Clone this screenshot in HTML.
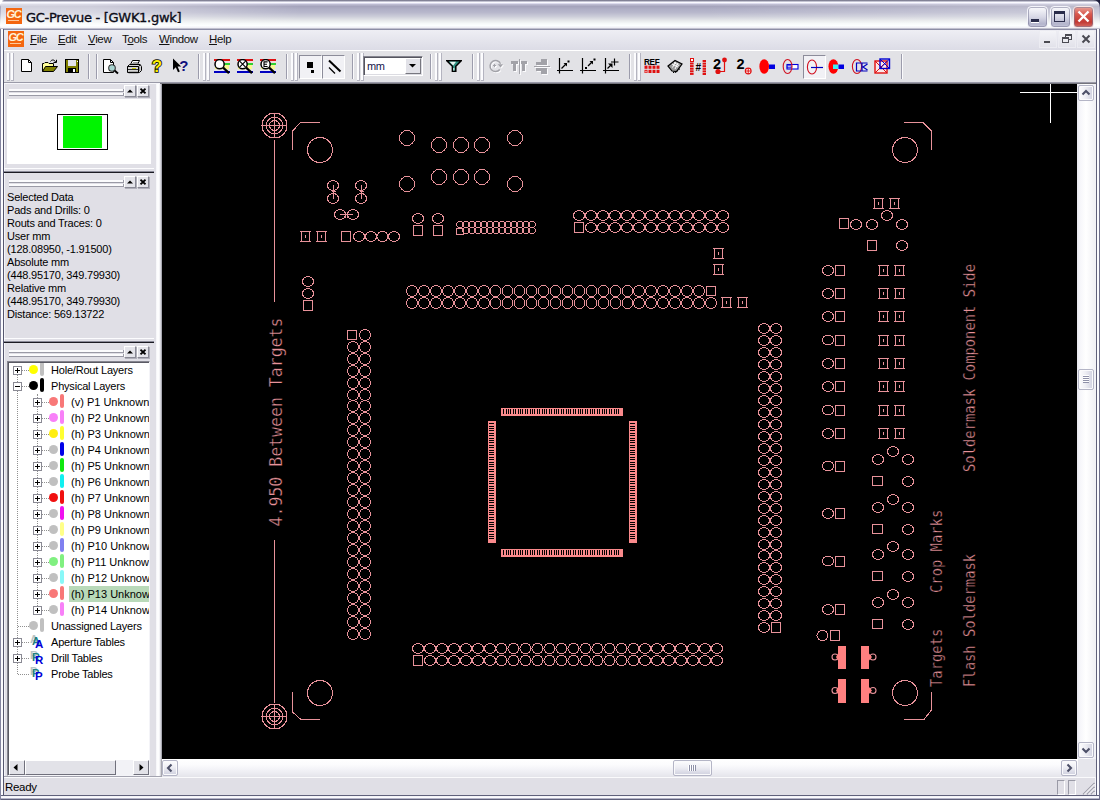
<!DOCTYPE html>
<html><head><meta charset="utf-8"><title>GC-Prevue - [GWK1.gwk]</title>
<style>
html,body{margin:0;padding:0;}
body{width:1100px;height:800px;overflow:hidden;background:#d4d3dc;font-family:"Liberation Sans","DejaVu Sans",sans-serif;font-size:11px;color:#000;position:relative;}
.abs{position:absolute;}
#win{position:absolute;left:0;top:0;width:1100px;height:800px;overflow:hidden;background:#e0dfe6;}
#title{position:absolute;left:0;top:0;width:1100px;height:29px;background:linear-gradient(#5d5d70 0px,#a8a8bc 1px,#fafaff 2.5px,#dddcee 3.5px,#bcbbd0 4.5px,#a5a4bc 6.5px,#b0b0c6 9.5px,#b8b8cc 12.5px,#cccdd9 16.5px,#e6e8ea 20.5px,#f6f9f9 23.5px,#fcffff 25.5px,#f0f0f6 27.5px,#c0c0ce 28.5px,#b0b0c0 29px);border-radius:7px 7px 0 0;}
#titleov{position:absolute;left:1px;top:3px;width:1098px;height:25px;background:linear-gradient(90deg,rgba(255,255,255,.5) 0,rgba(255,255,255,.45) 90px,rgba(255,255,255,.0) 300px,rgba(255,255,255,0) 700px,rgba(255,255,255,.22) 1000px,rgba(255,255,255,.28) 1100px);}
#titletext{position:absolute;left:26px;top:10px;font-family:"DejaVu Sans","Liberation Sans",sans-serif;font-size:13px;letter-spacing:-0.3px;color:#0c0c18;-webkit-text-stroke:0.35px #0c0c18;white-space:nowrap;}
.gcicon{position:absolute;width:16px;height:16px;background:#f4660f;color:#fff3d8;font:italic bold 11px "Liberation Sans",sans-serif;line-height:12px;text-align:center;letter-spacing:-1.2px;overflow:hidden;text-indent:-1px;}
.gcicon:after{content:"";position:absolute;left:2px;top:12px;width:11px;height:1px;background:#ffc89a;}
#menubar{position:absolute;left:4px;top:29px;width:1092px;height:21px;background:linear-gradient(#eeeef4,#dcdce6);border-top:1px solid #8d8ea6;box-sizing:border-box;}
.mi{position:absolute;top:33px;font-size:11.5px;letter-spacing:-0.35px;color:#111;white-space:nowrap;}
.mi u{text-decoration:underline;}
#toolbar{position:absolute;left:4px;top:50px;width:1092px;height:33px;background:#e2e2e6;border-top:1px solid #fff;box-sizing:border-box;}
.info{font-size:11px;letter-spacing:-0.2px;line-height:13px;white-space:nowrap;color:#000;}
.tr{font-size:11px;letter-spacing:-0.2px;line-height:16px;height:16px;padding:0 2px;white-space:nowrap;color:#000;}
</style></head><body>
<div id="win">
<div class="abs" style="left:0;top:28px;width:4px;height:772px;background:linear-gradient(90deg,#8485a0 0,#8485a0 1px,#fbfbfe 1px,#fbfbfe 3px,#56576f 3px,#56576f 4px);"></div>
<div class="abs" style="left:1095px;top:28px;width:5px;height:772px;background:linear-gradient(90deg,#f4f4f8 0,#f4f4f8 1px,#60617b 1px,#60617b 2px,#fbfbfe 2px,#fbfbfe 4px,#6e6f8c 4px,#6e6f8c 5px);"></div>
<div class="abs" style="left:0;top:795px;width:1100px;height:5px;background:linear-gradient(#60617b 0,#60617b 1px,#eeeef4 1px,#fbfbfe 2px,#fbfbfe 3px,#b4b4c8 3px,#b4b4c8 4px,#5e5f79 4px,#5e5f79 5px);"></div>
<div class="abs" style="left:0;top:795px;width:1px;height:5px;background:#8485a0;"></div><div class="abs" style="left:1099px;top:795px;width:1px;height:5px;background:#6e6f8c;"></div>
<div class="abs" style="left:0;top:0;width:1100px;height:10px;background:linear-gradient(90deg,#fff 0,#fff 2px,#8a8aa0 4px,#30304a 1094px,#1a1a3a 1100px);"></div>
<div id="title"></div><div id="titleov"></div>
<div class="gcicon" style="left:6px;top:8px;">GC</div>
<div id="titletext">GC-Prevue - [GWK1.gwk]</div>
<div class="abs" style="left:1027px;top:6px;width:21px;height:22px;box-sizing:border-box;border:1px solid #f4f4fa;border-radius:4px;background:linear-gradient(#fbfbfd 0,#d8d8e6 50%,#b3b4cc 85%,#c9c9dc 100%);box-shadow:0 0 0 1px rgba(120,120,150,.55) inset;"><div class="abs" style="left:3px;top:12px;width:8px;height:3px;background:#2a2c4a;box-shadow:0 1px 0 #fff;"></div></div>
<div class="abs" style="left:1050px;top:6px;width:21px;height:22px;box-sizing:border-box;border:1px solid #f4f4fa;border-radius:4px;background:linear-gradient(#fbfbfd 0,#d8d8e6 50%,#b3b4cc 85%,#c9c9dc 100%);box-shadow:0 0 0 1px rgba(120,120,150,.55) inset;"><div class="abs" style="left:3px;top:4px;width:11px;height:11px;border:1px solid #2a2c4a;border-top-width:3px;box-sizing:border-box;"></div></div>
<div class="abs" style="left:1073px;top:6px;width:21px;height:22px;box-sizing:border-box;border:1px solid #f6e6e4;border-radius:4px;background:linear-gradient(#e9a39a 0,#d9584e 35%,#c23a34 75%,#d66a62 100%);box-shadow:0 0 0 1px rgba(120,120,150,.55) inset;"><svg class="abs" style="left:2px;top:2px" width="15" height="15" viewBox="0 0 15 15"><path d="M2.5 2.5 L12.5 12.5 M12.5 2.5 L2.5 12.5" stroke="#fff" stroke-width="2.4" stroke-linecap="butt"/></svg></div>
<div id="menubar"></div>
<div class="gcicon" style="left:8px;top:31px;">GC</div>
<div class="mi" style="left:30px;"><u>F</u>ile</div>
<div class="mi" style="left:58px;"><u>E</u>dit</div>
<div class="mi" style="left:88px;"><u>V</u>iew</div>
<div class="mi" style="left:122px;">T<u>o</u>ols</div>
<div class="mi" style="left:159px;"><u>W</u>indow</div>
<div class="mi" style="left:209px;"><u>H</u>elp</div>
<div class="abs" style="left:1040px;top:31px;width:16px;height:16px;background:linear-gradient(#f4f4f8,#e2e2ea);box-shadow:0 0 0 1px #ececf2;"><div class="abs" style="left:4px;top:10px;width:6px;height:2px;background:#4a4a52;"></div></div>
<div class="abs" style="left:1059px;top:31px;width:16px;height:16px;background:linear-gradient(#f4f4f8,#e2e2ea);box-shadow:0 0 0 1px #ececf2;"><div class="abs" style="left:6px;top:3px;width:7px;height:6px;border:1px solid #4a4a52;border-top-width:2px;box-sizing:border-box;"></div><div class="abs" style="left:3px;top:6px;width:7px;height:6px;border:1px solid #4a4a52;border-top-width:2px;box-sizing:border-box;background:#ebebf0;"></div></div>
<div class="abs" style="left:1078px;top:31px;width:16px;height:16px;background:linear-gradient(#f4f4f8,#e2e2ea);box-shadow:0 0 0 1px #ececf2;"><svg class="abs" style="left:3px;top:3px" width="10" height="10" viewBox="0 0 10 10"><path d="M1.5 1.5 L8.5 8.5 M8.5 1.5 L1.5 8.5" stroke="#4a4a52" stroke-width="2"/></svg></div>
<div id="toolbar"></div>
<div class="abs" style="left:4px;top:82px;width:1092px;height:1px;background:#9a9aa8;"></div>
<div class="abs" style="left:4px;top:83px;width:1092px;height:1px;background:#f6f6fa;"></div>
<div class="abs" style="left:7px;top:53px;width:2px;height:27px;background:#fcfcfe;border-right:1px solid #b4b4c0;border-bottom:1px solid #b4b4c0;"></div><div class="abs" style="left:11px;top:53px;width:2px;height:27px;background:#fcfcfe;border-right:1px solid #b4b4c0;border-bottom:1px solid #b4b4c0;"></div>
<div class="abs" style="left:203px;top:53px;width:2px;height:27px;background:#fcfcfe;border-right:1px solid #b4b4c0;border-bottom:1px solid #b4b4c0;"></div><div class="abs" style="left:207px;top:53px;width:2px;height:27px;background:#fcfcfe;border-right:1px solid #b4b4c0;border-bottom:1px solid #b4b4c0;"></div>
<div class="abs" style="left:291px;top:53px;width:2px;height:27px;background:#fcfcfe;border-right:1px solid #b4b4c0;border-bottom:1px solid #b4b4c0;"></div><div class="abs" style="left:295px;top:53px;width:2px;height:27px;background:#fcfcfe;border-right:1px solid #b4b4c0;border-bottom:1px solid #b4b4c0;"></div>
<div class="abs" style="left:357px;top:53px;width:2px;height:27px;background:#fcfcfe;border-right:1px solid #b4b4c0;border-bottom:1px solid #b4b4c0;"></div><div class="abs" style="left:361px;top:53px;width:2px;height:27px;background:#fcfcfe;border-right:1px solid #b4b4c0;border-bottom:1px solid #b4b4c0;"></div>
<div class="abs" style="left:435px;top:53px;width:2px;height:27px;background:#fcfcfe;border-right:1px solid #b4b4c0;border-bottom:1px solid #b4b4c0;"></div><div class="abs" style="left:439px;top:53px;width:2px;height:27px;background:#fcfcfe;border-right:1px solid #b4b4c0;border-bottom:1px solid #b4b4c0;"></div>
<div class="abs" style="left:477px;top:53px;width:2px;height:27px;background:#fcfcfe;border-right:1px solid #b4b4c0;border-bottom:1px solid #b4b4c0;"></div><div class="abs" style="left:481px;top:53px;width:2px;height:27px;background:#fcfcfe;border-right:1px solid #b4b4c0;border-bottom:1px solid #b4b4c0;"></div>
<div class="abs" style="left:634px;top:53px;width:2px;height:27px;background:#fcfcfe;border-right:1px solid #b4b4c0;border-bottom:1px solid #b4b4c0;"></div><div class="abs" style="left:638px;top:53px;width:2px;height:27px;background:#fcfcfe;border-right:1px solid #b4b4c0;border-bottom:1px solid #b4b4c0;"></div>
<div class="abs" style="left:88px;top:54px;width:1px;height:25px;background:#9c9cac;border-right:1px solid #fafafc;"></div>
<div class="abs" style="left:96px;top:54px;width:1px;height:25px;background:#9c9cac;border-right:1px solid #fafafc;"></div>
<div class="abs" style="left:198px;top:54px;width:1px;height:25px;background:#9c9cac;border-right:1px solid #fafafc;"></div>
<div class="abs" style="left:286px;top:54px;width:1px;height:25px;background:#9c9cac;border-right:1px solid #fafafc;"></div>
<div class="abs" style="left:352px;top:54px;width:1px;height:25px;background:#9c9cac;border-right:1px solid #fafafc;"></div>
<div class="abs" style="left:430px;top:54px;width:1px;height:25px;background:#9c9cac;border-right:1px solid #fafafc;"></div>
<div class="abs" style="left:472px;top:54px;width:1px;height:25px;background:#9c9cac;border-right:1px solid #fafafc;"></div>
<div class="abs" style="left:629px;top:54px;width:1px;height:25px;background:#9c9cac;border-right:1px solid #fafafc;"></div>
<div class="abs" style="left:901px;top:54px;width:1px;height:25px;background:#9c9cac;border-right:1px solid #fafafc;"></div>
<!--ICONS-->
<svg class="abs" style="left:21px;top:59px" width="16" height="16" viewBox="0 0 16 16" ><path d="M0.5 0.5H7.5L10.5 3.5V12.5H0.5Z" fill="#fff" stroke="#000"/><path d="M7.5 0.5V3.5H10.5" fill="none" stroke="#000"/></svg>
<svg class="abs" style="left:42px;top:59px" width="16" height="16" viewBox="0 0 16 16" ><path d="M0.5 12.5V4.5H2L3 3.5H6L7 4.5H11.5V7.5" fill="#ffff99" stroke="#000"/><path d="M0.5 12.5L3.5 7.5H15.5L11.5 12.5Z" fill="#808000" stroke="#000"/><path d="M8.5 2.5C9.5 0.5 12.5 0.3 13.5 3" fill="none" stroke="#000"/><path d="M11.5 3.5H14.5V0.8" fill="none" stroke="#000"/></svg>
<svg class="abs" style="left:65px;top:59px" width="16" height="16" viewBox="0 0 16 16" shape-rendering="crispEdges"><rect x="0.5" y="0.5" width="13" height="13" fill="#808000" stroke="#000"/><rect x="3" y="1" width="8" height="6" fill="#e4e4ea"/><rect x="11.5" y="1.5" width="1" height="1" fill="#fff"/><rect x="3" y="9" width="8" height="4" fill="#000"/><rect x="8" y="10" width="2" height="3" fill="#fff"/></svg>
<svg class="abs" style="left:103px;top:59px" width="16" height="16" viewBox="0 0 16 16" ><path d="M0.5 0.5H7.5L10.5 3.5V13.5H0.5Z" fill="#fff" stroke="#000"/><path d="M7.5 0.5V3.5H10.5" fill="none" stroke="#000"/><circle cx="9" cy="9" r="3.3" fill="#a8d4d0" stroke="#333" stroke-width="1.1"/><path d="M11.5 11.5L15 14.5" stroke="#000" stroke-width="2"/></svg>
<svg class="abs" style="left:126px;top:60px" width="16" height="16" viewBox="0 0 16 16" ><path d="M4.5 4.5L6.5 0.5H13.5L11.5 4.5Z" fill="#fff" stroke="#000"/><path d="M7 2.5H12M6 3.5H11" stroke="#777" stroke-width=".7"/><path d="M1.5 6.5L3.5 4.5H14L15.5 6.5V10.5L13.5 12.5H1.5Z" fill="#d4d4d4" stroke="#000"/><path d="M1.5 6.5H12.5V12.5M12.5 6.5L14.5 4.8" fill="none" stroke="#000"/><path d="M1.5 9.5H12.5" stroke="#000" stroke-width=".8"/><rect x="6" y="8" width="4" height="1" fill="#c8c800"/><path d="M2.5 12.5H12.5" stroke="#000" stroke-width="1.4"/><path d="M13.5 7.5V11" stroke="#555" stroke-dasharray="1 1"/></svg>
<svg class="abs" style="left:149px;top:57px" width="16" height="18" viewBox="0 0 16 18" ><text x="8" y="15.2" text-anchor="middle" font-family="Liberation Sans,sans-serif" font-weight="bold" font-size="17" fill="#ffee00" stroke="#000" stroke-width="1.6" paint-order="stroke">?</text></svg>
<svg class="abs" style="left:172px;top:58px" width="18" height="16" viewBox="0 0 18 16" ><path d="M1 0.5V12L3.8 9.2L6 14.2L7.8 13.4L5.6 8.6H9.2Z" fill="#000"/><text x="11.8" y="12.6" text-anchor="middle" font-family="Liberation Sans,sans-serif" font-weight="bold" font-size="15" fill="#10107c">?</text></svg>
<svg class="abs" style="left:214px;top:59px" width="16" height="16" viewBox="0 0 16 16" ><rect x="0" y="0" width="16" height="2" fill="#e01010"/><rect x="0" y="2" width="16" height="2" fill="#f4d8dc"/><rect x="8" y="4" width="8" height="2" fill="#30d030"/><rect x="1" y="6" width="14" height="4.5" fill="#f8f890"/><rect x="0" y="10.5" width="16" height="1.5" fill="#e8e8f4"/><rect x="0" y="12" width="16" height="2" fill="#0000c0"/><path d="M9 8.5L15 14.2" stroke="#000" stroke-width="2.4"/><circle cx="5.6" cy="5.2" r="4.6" fill="#fff" stroke="#000" stroke-width="1.5"/></svg>
<svg class="abs" style="left:237px;top:59px" width="16" height="16" viewBox="0 0 16 16" ><rect x="0" y="0" width="16" height="2" fill="#e01010"/><rect x="0" y="2" width="16" height="2" fill="#f4d8dc"/><rect x="8" y="4" width="8" height="2" fill="#30d030"/><rect x="1" y="6" width="14" height="4.5" fill="#f8f890"/><rect x="0" y="10.5" width="16" height="1.5" fill="#e8e8f4"/><rect x="0" y="12" width="16" height="2" fill="#0000c0"/><path d="M9 8.5L15 14.2" stroke="#000" stroke-width="2.4"/><circle cx="5.6" cy="5.2" r="4.6" fill="#fff" stroke="#000" stroke-width="1.5"/><path d="M2.6 2.2L8.6 8.2M8.6 2.2L2.6 8.2" stroke="#000" stroke-width="1.1"/></svg>
<svg class="abs" style="left:260px;top:59px" width="16" height="16" viewBox="0 0 16 16" ><rect x="0" y="0" width="16" height="2" fill="#e01010"/><rect x="0" y="2" width="16" height="2" fill="#f4d8dc"/><rect x="8" y="4" width="8" height="2" fill="#30d030"/><rect x="1" y="6" width="14" height="4.5" fill="#f8f890"/><rect x="0" y="10.5" width="16" height="1.5" fill="#e8e8f4"/><rect x="0" y="12" width="16" height="2" fill="#0000c0"/><path d="M9 8.5L15 14.2" stroke="#000" stroke-width="2.4"/><circle cx="5.6" cy="5.2" r="4.6" fill="#fff" stroke="#000" stroke-width="1.5"/><path d="M7.6 2.9H4V7.5H7.6M4 5.2H7" fill="none" stroke="#000" stroke-width="1.1"/></svg>
<div class="abs" style="left:299px;top:55px;width:23px;height:24px;box-sizing:border-box;background:#f1f1f5;border:1px solid;border-color:#8c8c9a #fff #fff #8c8c9a;"></div>
<div class="abs" style="left:322px;top:55px;width:23px;height:24px;box-sizing:border-box;background:#f1f1f5;border:1px solid;border-color:#8c8c9a #fff #fff #8c8c9a;"></div>
<svg class="abs" style="left:303px;top:59px" width="16" height="16" viewBox="0 0 16 16" shape-rendering="crispEdges"><rect x="4" y="3" width="6" height="6" fill="#000"/><rect x="8" y="11" width="3" height="3" fill="#000"/></svg>
<svg class="abs" style="left:326px;top:59px" width="16" height="16" viewBox="0 0 16 16" ><path d="M3 1.5L14.5 12.5" stroke="#000" stroke-width="2"/><path d="M3 8.5L9 14.5" stroke="#000" stroke-width="1.2"/></svg>
<div class="abs" style="left:363px;top:56px;width:60px;height:20px;box-sizing:border-box;background:#fff;border:1px solid;border-color:#85858f #fff #fff #85858f;box-shadow:inset 1px 1px 0 #55555f, inset -1px -1px 0 #dcdce2;"></div>
<div class="abs" style="left:367px;top:60px;font-size:11px;color:#15154a;letter-spacing:-0.4px;">mm</div>
<div class="abs" style="left:405px;top:58px;width:16px;height:16px;box-sizing:border-box;background:#e2e2e8;border:1px solid;border-color:#fff #77777f #77777f #fff;"></div>
<svg class="abs" style="left:409px;top:64px" width="7" height="4" viewBox="0 0 7 4" ><path d="M0 0H7L3.5 3.5Z" fill="#000"/></svg>
<svg class="abs" style="left:446px;top:60px" width="16" height="16" viewBox="0 0 16 16" ><path d="M0.8 0.8H15.2L9.8 6.3V11.2H6.4V6.3Z" fill="#2f9080" stroke="#000" stroke-width="1.5" stroke-linejoin="miter"/><path d="M3.5 1.8H10L7.2 5.5Z" fill="#e8f4f0"/><rect x="7.2" y="8" width="1.2" height="2.6" fill="#d0ece4"/></svg>
<svg class="abs" style="left:489px;top:60px" width="16" height="16" viewBox="0 0 16 16" ><path d="M12.6 4.8A5.5 5.5 0 1 0 11.8 10.6" fill="none" stroke="#fbfbfd" stroke-width="1.5"/><path d="M9.6 5.2H15L12.6 8.6Z" fill="#fbfbfd"/><path d="M5 6.5H8M6.5 5V8" stroke="#fbfbfd" stroke-width="1"/></svg>
<svg class="abs" style="left:512px;top:60px" width="16" height="16" viewBox="0 0 16 16" shape-rendering="crispEdges"><path d="M0 1.5H6.5V5H5V12H2V5H0Z" fill="#fbfbfd"/><path d="M9.5 1.5H15.5V5H13.5V12H10.5V5H9.5Z" fill="#fbfbfd"/><path d="M8 0V15" stroke="#fbfbfd" stroke-width="1"/></svg>
<svg class="abs" style="left:535px;top:60px" width="16" height="16" viewBox="0 0 16 16" shape-rendering="crispEdges"><path d="M2 0H13V6H2V3H7V0Z M2 9H13V15H7V12H2Z" fill="#fbfbfd"/><path d="M7 0H13V3H7Z" fill="#fbfbfd"/><path d="M0 7.5H16" stroke="#fbfbfd" stroke-width="1"/></svg>
<svg class="abs" style="left:488px;top:59px" width="16" height="16" viewBox="0 0 16 16" ><path d="M12.6 4.8A5.5 5.5 0 1 0 11.8 10.6" fill="none" stroke="#a2a2a8" stroke-width="1.5"/><path d="M9.6 5.2H15L12.6 8.6Z" fill="#a2a2a8"/><path d="M5 6.5H8M6.5 5V8" stroke="#a2a2a8" stroke-width="1"/></svg>
<svg class="abs" style="left:511px;top:59px" width="16" height="16" viewBox="0 0 16 16" shape-rendering="crispEdges"><path d="M0 1.5H6.5V5H5V12H2V5H0Z" fill="#a2a2a8"/><path d="M9.5 1.5H15.5V5H13.5V12H10.5V5H9.5Z" fill="#a2a2a8"/><path d="M8 0V15" stroke="#a2a2a8" stroke-width="1"/></svg>
<svg class="abs" style="left:534px;top:59px" width="16" height="16" viewBox="0 0 16 16" shape-rendering="crispEdges"><path d="M2 0H13V6H2V3H7V0Z M2 9H13V15H7V12H2Z" fill="#a2a2a8"/><path d="M7 0H13V3H7Z" fill="#a2a2a8"/><path d="M0 7.5H16" stroke="#a2a2a8" stroke-width="1"/></svg>
<svg class="abs" style="left:557px;top:58px" width="16" height="16" viewBox="0 0 16 16" ><path d="M2.5 0V15.5M0 12.5H16" stroke="#000" stroke-width="1.2" fill="none"/><path d="M4.5 10.5L9 6" stroke="#000" stroke-width="1.2"/><path d="M6.5 5H10V8.5Z" fill="#000"/><rect x="10.5" y="2.5" width="2" height="2" fill="#000"/></svg>
<svg class="abs" style="left:580px;top:58px" width="16" height="16" viewBox="0 0 16 16" ><path d="M2.5 0V15.5M0 12.5H16" stroke="#000" stroke-width="1.2" fill="none"/><rect x="5" y="9" width="2" height="2" fill="#000"/><path d="M8 8L12 4" stroke="#000" stroke-width="1.2"/><path d="M9.5 3H13V6.5Z" fill="#000"/><rect x="13.5" y="0.5" width="2" height="2" fill="#000"/></svg>
<svg class="abs" style="left:603px;top:58px" width="16" height="16" viewBox="0 0 16 16" ><path d="M2.5 0V15.5M0 12.5H16" stroke="#000" stroke-width="1.2" fill="none"/><path d="M4.5 10.5L8 7" stroke="#000" stroke-width="1.2"/><path d="M5 5.5H9.5V10Z" fill="#000"/><path d="M11.5 0.5V7.5M8 4H15.5" stroke="#000" stroke-width="1.2"/></svg>
<svg class="abs" style="left:644px;top:58px" width="17" height="17" viewBox="0 0 17 17" ><text x="0" y="6.6" font-family="Liberation Sans,sans-serif" font-weight="bold" font-size="8.2" letter-spacing="-0.3" fill="#000">REF</text><rect x="0.5" y="7.6" width="3" height="3.2" fill="#e01010"/><rect x="4.5" y="7.6" width="3" height="3.2" fill="#e01010"/><rect x="8.5" y="7.6" width="3" height="3.2" fill="#e01010"/><rect x="12.5" y="7.6" width="3" height="3.2" fill="#e01010"/><rect x="0.5" y="11.8" width="3" height="3.2" fill="#e01010"/><rect x="4.5" y="11.8" width="3" height="3.2" fill="#e01010"/><rect x="8.5" y="11.8" width="3" height="3.2" fill="#e01010"/><rect x="12.5" y="11.8" width="3" height="3.2" fill="#e01010"/><rect x="1.5" y="12.8" width="1" height="1.6" fill="#fff"/></svg>
<svg class="abs" style="left:667px;top:59px" width="16" height="16" viewBox="0 0 16 16" ><path d="M1 7L8 1.5L15 5L9.5 12.5L5 12Z" fill="#9a9a9a" stroke="#000" stroke-width="1.2"/><path d="M5 5L11 8M7 3.5L12 6.5M8 10L11 4M5.5 8.5L8.5 3" stroke="#fff" stroke-width="1"/><path d="M6 13.5H9M10 12L13 9.5" stroke="#000" stroke-width="1.2" stroke-dasharray="1.2 1"/></svg>
<svg class="abs" style="left:690px;top:58px" width="16" height="18" viewBox="0 0 16 18" ><rect x="0.5" y="0.5" width="3" height="3" fill="#fff" stroke="#e01010"/><rect x="0" y="4.5" width="3.6" height="2" fill="#e01010"/><rect x="0" y="7.1" width="3.6" height="2" fill="#e01010"/><rect x="0" y="9.7" width="3.6" height="2" fill="#e01010"/><rect x="0" y="12.3" width="3.6" height="2" fill="#e01010"/><rect x="0" y="14.9" width="3.6" height="2" fill="#e01010"/><rect x="12.6" y="2" width="3.4" height="2" fill="#e01010"/><rect x="12.6" y="4.6" width="3.4" height="2" fill="#e01010"/><rect x="12.6" y="7.2" width="3.4" height="2" fill="#e01010"/><rect x="12.6" y="9.8" width="3.4" height="2" fill="#e01010"/><rect x="12.6" y="12.4" width="3.4" height="2" fill="#e01010"/><rect x="12.6" y="15" width="3.4" height="2" fill="#e01010"/><text x="8.2" y="12.5" text-anchor="middle" font-family="Liberation Sans,sans-serif" font-weight="bold" font-size="10" fill="#000">#</text></svg>
<svg class="abs" style="left:713px;top:57px" width="17" height="18" viewBox="0 0 17 18" ><text x="0" y="11.5" font-family="Liberation Sans,sans-serif" font-weight="bold" font-size="14.5" fill="#000">2</text><path d="M5 14.5H11.5V3" fill="none" stroke="#e01010" stroke-width="1.2"/><circle cx="11.5" cy="3" r="2.4" fill="#e01010"/><circle cx="5" cy="14.5" r="2.6" fill="#e01010"/></svg>
<svg class="abs" style="left:736px;top:57px" width="17" height="18" viewBox="0 0 17 18" ><text x="0.5" y="11.5" font-family="Liberation Sans,sans-serif" font-weight="bold" font-size="14.5" fill="#000">2</text><circle cx="12.2" cy="14" r="2.9" fill="#fff" stroke="#e01010" stroke-width="1.1"/><path d="M12.2 11V17M9.2 14H15.2" stroke="#e01010" stroke-width="1"/></svg>
<svg class="abs" style="left:759px;top:58px" width="17" height="17" viewBox="0 0 17 17" ><ellipse cx="5.2" cy="8.5" rx="4.8" ry="7.3" fill="#ff0000"/><rect x="10" y="6.5" width="6" height="4.5" fill="#0000e0"/></svg>
<svg class="abs" style="left:782px;top:58px" width="17" height="17" viewBox="0 0 17 17" ><rect x="5" y="6.5" width="11" height="4.5" fill="#fff" stroke="#0000e0" stroke-width="1.1"/><rect x="5.2" y="7.8" width="4" height="2" fill="#dcdcf4" stroke="#0000e0" stroke-width=".8"/><ellipse cx="5.6" cy="8.5" rx="4.4" ry="7" fill="none" stroke="#d01020" stroke-width="1.1"/></svg>
<div class="abs" style="left:803px;top:55px;width:23px;height:24px;box-sizing:border-box;background:#f1f1f5;border:1px solid;border-color:#8c8c9a #fff #fff #8c8c9a;"></div>
<svg class="abs" style="left:806px;top:58px" width="18" height="17" viewBox="0 0 18 17" ><ellipse cx="6" cy="9" rx="4.6" ry="7" fill="none" stroke="#d01020" stroke-width="1.1"/><path d="M5 9.5H17" stroke="#0000c0" stroke-width="1.2"/></svg>
<svg class="abs" style="left:828px;top:58px" width="17" height="17" viewBox="0 0 17 17" ><ellipse cx="5.4" cy="8.5" rx="4.9" ry="7.3" fill="#ff0000"/><rect x="5" y="6.5" width="5.5" height="4.5" fill="#40f0f0"/><rect x="10.5" y="6.5" width="5.5" height="4.5" fill="#0000e0"/></svg>
<svg class="abs" style="left:851px;top:58px" width="17" height="17" viewBox="0 0 17 17" ><ellipse cx="6" cy="8.5" rx="4.6" ry="7" fill="none" stroke="#d01020" stroke-width="1.1"/><path d="M16.5 5H5.5V13H16.5M11 5V13M16.5 6L12 9L16.5 12" fill="none" stroke="#0000c0" stroke-width="1.2"/></svg>
<svg class="abs" style="left:874px;top:58px" width="17" height="17" viewBox="0 0 17 17" ><rect x="1" y="3" width="12" height="12" fill="#fbe8e8" stroke="#e01010" stroke-width="1.4"/><path d="M1 3L13 15M13 3L1 15" stroke="#e01010" stroke-width="1"/><rect x="6" y="1" width="9.5" height="9.5" fill="none" stroke="#0000d0" stroke-width="1.4"/><path d="M6 1L15.5 10.5M15.5 1L6 10.5" stroke="#0000d0" stroke-width="1"/></svg>
<div class="abs" style="left:4px;top:84px;width:158px;height:693px;background:#e0dfe6;"></div>
<div class="abs" style="left:156px;top:84px;width:6px;height:693px;background:linear-gradient(90deg,#f0f0f5 0,#fdfdfe 1px,#fdfdfe 3px,#e9e9ee 4px,#c4c4cc 5px,#8c8c94 6px);"></div>
<div class="abs" style="left:4px;top:84px;width:1px;height:693px;background:#f4f4f8;"></div>
<div class="abs" style="left:9px;top:89px;width:114px;height:2px;background:#fbfbfd;border-bottom:1px solid #9a9aa6;border-right:1px solid #9a9aa6;"></div><div class="abs" style="left:9px;top:93px;width:114px;height:2px;background:#fbfbfd;border-bottom:1px solid #9a9aa6;border-right:1px solid #9a9aa6;"></div><div class="abs" style="left:124px;top:85px;width:12px;height:12px;box-sizing:border-box;background:#e4e4ea;border:1px solid;border-color:#fff #8a8a96 #8a8a96 #fff;box-shadow:1px 1px 0 #b0b0ba;"><svg class="abs" style="left:2px;top:3px" width="6" height="4" viewBox="0 0 6 4"><path d="M0 3.5H6L3 0.5Z" fill="#000"/></svg></div><div class="abs" style="left:137px;top:85px;width:12px;height:12px;box-sizing:border-box;background:#e4e4ea;border:1px solid;border-color:#fff #8a8a96 #8a8a96 #fff;box-shadow:1px 1px 0 #b0b0ba;"><svg class="abs" style="left:2px;top:2px" width="6" height="6" viewBox="0 0 6 6"><path d="M0.5 0.8L5.5 5.2M5.5 0.8L0.5 5.2" stroke="#000" stroke-width="1.8"/></svg></div>
<div class="abs" style="left:7px;top:99px;width:144px;height:65px;background:#fff;"></div>
<div class="abs" style="left:57px;top:114px;width:51px;height:36px;box-sizing:border-box;border:1px solid #000;background:#fff;"></div>
<div class="abs" style="left:63px;top:116px;width:39px;height:32px;background:#00f400;"></div>
<div class="abs" style="left:4px;top:168px;width:150px;height:1px;background:#fcfcfe;"></div><div class="abs" style="left:4px;top:171px;width:150px;height:1px;background:#8a8a98;"></div><div class="abs" style="left:4px;top:172px;width:150px;height:1px;background:#1a1a22;"></div>
<div class="abs" style="left:9px;top:180px;width:114px;height:2px;background:#fbfbfd;border-bottom:1px solid #9a9aa6;border-right:1px solid #9a9aa6;"></div><div class="abs" style="left:9px;top:184px;width:114px;height:2px;background:#fbfbfd;border-bottom:1px solid #9a9aa6;border-right:1px solid #9a9aa6;"></div><div class="abs" style="left:124px;top:176px;width:12px;height:12px;box-sizing:border-box;background:#e4e4ea;border:1px solid;border-color:#fff #8a8a96 #8a8a96 #fff;box-shadow:1px 1px 0 #b0b0ba;"><svg class="abs" style="left:2px;top:3px" width="6" height="4" viewBox="0 0 6 4"><path d="M0 3.5H6L3 0.5Z" fill="#000"/></svg></div><div class="abs" style="left:137px;top:176px;width:12px;height:12px;box-sizing:border-box;background:#e4e4ea;border:1px solid;border-color:#fff #8a8a96 #8a8a96 #fff;box-shadow:1px 1px 0 #b0b0ba;"><svg class="abs" style="left:2px;top:2px" width="6" height="6" viewBox="0 0 6 6"><path d="M0.5 0.8L5.5 5.2M5.5 0.8L0.5 5.2" stroke="#000" stroke-width="1.8"/></svg></div>
<div class="abs info" style="left:7px;top:191px;">Selected Data</div>
<div class="abs info" style="left:7px;top:204px;">Pads and Drills: 0</div>
<div class="abs info" style="left:7px;top:217px;">Routs and Traces: 0</div>
<div class="abs info" style="left:7px;top:230px;">User mm</div>
<div class="abs info" style="left:7px;top:243px;">(128.08950, -1.91500)</div>
<div class="abs info" style="left:7px;top:256px;">Absolute mm</div>
<div class="abs info" style="left:7px;top:269px;">(448.95170, 349.79930)</div>
<div class="abs info" style="left:7px;top:282px;">Relative mm</div>
<div class="abs info" style="left:7px;top:295px;">(448.95170, 349.79930)</div>
<div class="abs info" style="left:7px;top:308px;">Distance: 569.13722</div>
<div class="abs" style="left:4px;top:338px;width:150px;height:1px;background:#fcfcfe;"></div><div class="abs" style="left:4px;top:341px;width:150px;height:1px;background:#8a8a98;"></div><div class="abs" style="left:4px;top:342px;width:150px;height:1px;background:#1a1a22;"></div>
<div class="abs" style="left:9px;top:350px;width:114px;height:2px;background:#fbfbfd;border-bottom:1px solid #9a9aa6;border-right:1px solid #9a9aa6;"></div><div class="abs" style="left:9px;top:354px;width:114px;height:2px;background:#fbfbfd;border-bottom:1px solid #9a9aa6;border-right:1px solid #9a9aa6;"></div><div class="abs" style="left:124px;top:346px;width:12px;height:12px;box-sizing:border-box;background:#e4e4ea;border:1px solid;border-color:#fff #8a8a96 #8a8a96 #fff;box-shadow:1px 1px 0 #b0b0ba;"><svg class="abs" style="left:2px;top:3px" width="6" height="4" viewBox="0 0 6 4"><path d="M0 3.5H6L3 0.5Z" fill="#000"/></svg></div><div class="abs" style="left:137px;top:346px;width:12px;height:12px;box-sizing:border-box;background:#e4e4ea;border:1px solid;border-color:#fff #8a8a96 #8a8a96 #fff;box-shadow:1px 1px 0 #b0b0ba;"><svg class="abs" style="left:2px;top:2px" width="6" height="6" viewBox="0 0 6 6"><path d="M0.5 0.8L5.5 5.2M5.5 0.8L0.5 5.2" stroke="#000" stroke-width="1.8"/></svg></div>
<div class="abs" style="left:7px;top:361px;width:143px;height:415px;box-sizing:border-box;background:#fff;border:1px solid;border-color:#85858f #f4f4f8 #f4f4f8 #85858f;box-shadow:inset 1px 1px 0 #5a5a64;"></div>
<div class="abs" style="left:9px;top:363px;width:140px;height:397px;overflow:hidden;">
<div class="abs" style="left:8px;top:12px;width:0;height:299px;border-left:1px dotted #909090;"></div>
<div class="abs" style="left:28px;top:31px;width:0;height:216px;border-left:1px dotted #909090;"></div>
<div class="abs" style="left:9px;top:7px;width:11px;height:0;border-top:1px dotted #909090;"></div>
<div class="abs" style="left:4px;top:3px;width:9px;height:9px;box-sizing:border-box;border:1px solid #8a8a94;background:#fff;"><div class="abs" style="left:1px;top:3px;width:5px;height:1px;background:#000;"></div><div class="abs" style="left:3px;top:1px;width:1px;height:5px;background:#000;"></div></div>
<div class="abs" style="left:20px;top:2px;width:9px;height:9px;border-radius:50%;background:#ffff00;"></div>
<div class="abs" style="left:31px;top:-1px;width:4px;height:14px;border-radius:2px;background:#c0c0c0;"></div>
<div class="abs tr" style="left:40px;top:-1px;">Hole/Rout Layers</div>
<div class="abs" style="left:9px;top:23px;width:11px;height:0;border-top:1px dotted #909090;"></div>
<div class="abs" style="left:4px;top:19px;width:9px;height:9px;box-sizing:border-box;border:1px solid #8a8a94;background:#fff;"><div class="abs" style="left:1px;top:3px;width:5px;height:1px;background:#000;"></div></div>
<div class="abs" style="left:20px;top:18px;width:9px;height:9px;border-radius:50%;background:#000;"></div>
<div class="abs" style="left:31px;top:15px;width:4px;height:14px;border-radius:2px;background:#000;"></div>
<div class="abs tr" style="left:40px;top:15px;">Physical Layers</div>
<div class="abs" style="left:29px;top:39px;width:11px;height:0;border-top:1px dotted #909090;"></div>
<div class="abs" style="left:24px;top:35px;width:9px;height:9px;box-sizing:border-box;border:1px solid #8a8a94;background:#fff;"><div class="abs" style="left:1px;top:3px;width:5px;height:1px;background:#000;"></div><div class="abs" style="left:3px;top:1px;width:1px;height:5px;background:#000;"></div></div>
<div class="abs" style="left:40px;top:34px;width:9px;height:9px;border-radius:50%;background:#f87878;"></div>
<div class="abs" style="left:51px;top:31px;width:4px;height:14px;border-radius:2px;background:#f87878;"></div>
<div class="abs tr" style="left:60px;top:31px;letter-spacing:0;">(v) P1 Unknown</div>
<div class="abs" style="left:29px;top:55px;width:11px;height:0;border-top:1px dotted #909090;"></div>
<div class="abs" style="left:24px;top:51px;width:9px;height:9px;box-sizing:border-box;border:1px solid #8a8a94;background:#fff;"><div class="abs" style="left:1px;top:3px;width:5px;height:1px;background:#000;"></div><div class="abs" style="left:3px;top:1px;width:1px;height:5px;background:#000;"></div></div>
<div class="abs" style="left:40px;top:50px;width:9px;height:9px;border-radius:50%;background:#f880f8;"></div>
<div class="abs" style="left:51px;top:47px;width:4px;height:14px;border-radius:2px;background:#f880f8;"></div>
<div class="abs tr" style="left:60px;top:47px;letter-spacing:0;">(h) P2 Unknown</div>
<div class="abs" style="left:29px;top:71px;width:11px;height:0;border-top:1px dotted #909090;"></div>
<div class="abs" style="left:24px;top:67px;width:9px;height:9px;box-sizing:border-box;border:1px solid #8a8a94;background:#fff;"><div class="abs" style="left:1px;top:3px;width:5px;height:1px;background:#000;"></div><div class="abs" style="left:3px;top:1px;width:1px;height:5px;background:#000;"></div></div>
<div class="abs" style="left:40px;top:66px;width:9px;height:9px;border-radius:50%;background:#ffee10;"></div>
<div class="abs" style="left:51px;top:63px;width:4px;height:14px;border-radius:2px;background:#ffff30;"></div>
<div class="abs tr" style="left:60px;top:63px;letter-spacing:0;">(h) P3 Unknown</div>
<div class="abs" style="left:29px;top:87px;width:11px;height:0;border-top:1px dotted #909090;"></div>
<div class="abs" style="left:24px;top:83px;width:9px;height:9px;box-sizing:border-box;border:1px solid #8a8a94;background:#fff;"><div class="abs" style="left:1px;top:3px;width:5px;height:1px;background:#000;"></div><div class="abs" style="left:3px;top:1px;width:1px;height:5px;background:#000;"></div></div>
<div class="abs" style="left:40px;top:82px;width:9px;height:9px;border-radius:50%;background:#c0c0c0;"></div>
<div class="abs" style="left:51px;top:79px;width:4px;height:14px;border-radius:2px;background:#0000e8;"></div>
<div class="abs tr" style="left:60px;top:79px;letter-spacing:0;">(h) P4 Unknown</div>
<div class="abs" style="left:29px;top:103px;width:11px;height:0;border-top:1px dotted #909090;"></div>
<div class="abs" style="left:24px;top:99px;width:9px;height:9px;box-sizing:border-box;border:1px solid #8a8a94;background:#fff;"><div class="abs" style="left:1px;top:3px;width:5px;height:1px;background:#000;"></div><div class="abs" style="left:3px;top:1px;width:1px;height:5px;background:#000;"></div></div>
<div class="abs" style="left:40px;top:98px;width:9px;height:9px;border-radius:50%;background:#c0c0c0;"></div>
<div class="abs" style="left:51px;top:95px;width:4px;height:14px;border-radius:2px;background:#10e810;"></div>
<div class="abs tr" style="left:60px;top:95px;letter-spacing:0;">(h) P5 Unknown</div>
<div class="abs" style="left:29px;top:119px;width:11px;height:0;border-top:1px dotted #909090;"></div>
<div class="abs" style="left:24px;top:115px;width:9px;height:9px;box-sizing:border-box;border:1px solid #8a8a94;background:#fff;"><div class="abs" style="left:1px;top:3px;width:5px;height:1px;background:#000;"></div><div class="abs" style="left:3px;top:1px;width:1px;height:5px;background:#000;"></div></div>
<div class="abs" style="left:40px;top:114px;width:9px;height:9px;border-radius:50%;background:#c0c0c0;"></div>
<div class="abs" style="left:51px;top:111px;width:4px;height:14px;border-radius:2px;background:#10f0f0;"></div>
<div class="abs tr" style="left:60px;top:111px;letter-spacing:0;">(h) P6 Unknown</div>
<div class="abs" style="left:29px;top:135px;width:11px;height:0;border-top:1px dotted #909090;"></div>
<div class="abs" style="left:24px;top:131px;width:9px;height:9px;box-sizing:border-box;border:1px solid #8a8a94;background:#fff;"><div class="abs" style="left:1px;top:3px;width:5px;height:1px;background:#000;"></div><div class="abs" style="left:3px;top:1px;width:1px;height:5px;background:#000;"></div></div>
<div class="abs" style="left:40px;top:130px;width:9px;height:9px;border-radius:50%;background:#f01010;"></div>
<div class="abs" style="left:51px;top:127px;width:4px;height:14px;border-radius:2px;background:#f01010;"></div>
<div class="abs tr" style="left:60px;top:127px;letter-spacing:0;">(h) P7 Unknown</div>
<div class="abs" style="left:29px;top:151px;width:11px;height:0;border-top:1px dotted #909090;"></div>
<div class="abs" style="left:24px;top:147px;width:9px;height:9px;box-sizing:border-box;border:1px solid #8a8a94;background:#fff;"><div class="abs" style="left:1px;top:3px;width:5px;height:1px;background:#000;"></div><div class="abs" style="left:3px;top:1px;width:1px;height:5px;background:#000;"></div></div>
<div class="abs" style="left:40px;top:146px;width:9px;height:9px;border-radius:50%;background:#c0c0c0;"></div>
<div class="abs" style="left:51px;top:143px;width:4px;height:14px;border-radius:2px;background:#f010f0;"></div>
<div class="abs tr" style="left:60px;top:143px;letter-spacing:0;">(h) P8 Unknown</div>
<div class="abs" style="left:29px;top:167px;width:11px;height:0;border-top:1px dotted #909090;"></div>
<div class="abs" style="left:24px;top:163px;width:9px;height:9px;box-sizing:border-box;border:1px solid #8a8a94;background:#fff;"><div class="abs" style="left:1px;top:3px;width:5px;height:1px;background:#000;"></div><div class="abs" style="left:3px;top:1px;width:1px;height:5px;background:#000;"></div></div>
<div class="abs" style="left:40px;top:162px;width:9px;height:9px;border-radius:50%;background:#c0c0c0;"></div>
<div class="abs" style="left:51px;top:159px;width:4px;height:14px;border-radius:2px;background:#ffff88;"></div>
<div class="abs tr" style="left:60px;top:159px;letter-spacing:0;">(h) P9 Unknown</div>
<div class="abs" style="left:29px;top:183px;width:11px;height:0;border-top:1px dotted #909090;"></div>
<div class="abs" style="left:24px;top:179px;width:9px;height:9px;box-sizing:border-box;border:1px solid #8a8a94;background:#fff;"><div class="abs" style="left:1px;top:3px;width:5px;height:1px;background:#000;"></div><div class="abs" style="left:3px;top:1px;width:1px;height:5px;background:#000;"></div></div>
<div class="abs" style="left:40px;top:178px;width:9px;height:9px;border-radius:50%;background:#c0c0c0;"></div>
<div class="abs" style="left:51px;top:175px;width:4px;height:14px;border-radius:2px;background:#8080f0;"></div>
<div class="abs tr" style="left:60px;top:175px;letter-spacing:0;">(h) P10 Unknown</div>
<div class="abs" style="left:29px;top:199px;width:11px;height:0;border-top:1px dotted #909090;"></div>
<div class="abs" style="left:24px;top:195px;width:9px;height:9px;box-sizing:border-box;border:1px solid #8a8a94;background:#fff;"><div class="abs" style="left:1px;top:3px;width:5px;height:1px;background:#000;"></div><div class="abs" style="left:3px;top:1px;width:1px;height:5px;background:#000;"></div></div>
<div class="abs" style="left:40px;top:194px;width:9px;height:9px;border-radius:50%;background:#80f080;"></div>
<div class="abs" style="left:51px;top:191px;width:4px;height:14px;border-radius:2px;background:#80f080;"></div>
<div class="abs tr" style="left:60px;top:191px;letter-spacing:0;">(h) P11 Unknown</div>
<div class="abs" style="left:29px;top:215px;width:11px;height:0;border-top:1px dotted #909090;"></div>
<div class="abs" style="left:24px;top:211px;width:9px;height:9px;box-sizing:border-box;border:1px solid #8a8a94;background:#fff;"><div class="abs" style="left:1px;top:3px;width:5px;height:1px;background:#000;"></div><div class="abs" style="left:3px;top:1px;width:1px;height:5px;background:#000;"></div></div>
<div class="abs" style="left:40px;top:210px;width:9px;height:9px;border-radius:50%;background:#c0c0c0;"></div>
<div class="abs" style="left:51px;top:207px;width:4px;height:14px;border-radius:2px;background:#88f8f8;"></div>
<div class="abs tr" style="left:60px;top:207px;letter-spacing:0;">(h) P12 Unknown</div>
<div class="abs" style="left:29px;top:231px;width:11px;height:0;border-top:1px dotted #909090;"></div>
<div class="abs" style="left:24px;top:227px;width:9px;height:9px;box-sizing:border-box;border:1px solid #8a8a94;background:#fff;"><div class="abs" style="left:1px;top:3px;width:5px;height:1px;background:#000;"></div><div class="abs" style="left:3px;top:1px;width:1px;height:5px;background:#000;"></div></div>
<div class="abs" style="left:40px;top:226px;width:9px;height:9px;border-radius:50%;background:#f87878;"></div>
<div class="abs" style="left:51px;top:223px;width:4px;height:14px;border-radius:2px;background:#f87878;"></div>
<div class="abs tr" style="left:60px;top:223px; background:#b9d9b9;letter-spacing:0;">(h) P13 Unknown</div>
<div class="abs" style="left:29px;top:247px;width:11px;height:0;border-top:1px dotted #909090;"></div>
<div class="abs" style="left:24px;top:243px;width:9px;height:9px;box-sizing:border-box;border:1px solid #8a8a94;background:#fff;"><div class="abs" style="left:1px;top:3px;width:5px;height:1px;background:#000;"></div><div class="abs" style="left:3px;top:1px;width:1px;height:5px;background:#000;"></div></div>
<div class="abs" style="left:40px;top:242px;width:9px;height:9px;border-radius:50%;background:#c0c0c0;"></div>
<div class="abs" style="left:51px;top:239px;width:4px;height:14px;border-radius:2px;background:#f880f8;"></div>
<div class="abs tr" style="left:60px;top:239px;letter-spacing:0;">(h) P14 Unknown</div>
<div class="abs" style="left:9px;top:263px;width:11px;height:0;border-top:1px dotted #909090;"></div>
<div class="abs" style="left:20px;top:258px;width:9px;height:9px;border-radius:50%;background:#c0c0c0;"></div>
<div class="abs" style="left:31px;top:255px;width:4px;height:14px;border-radius:2px;background:#c0c0c0;"></div>
<div class="abs tr" style="left:40px;top:255px;">Unassigned Layers</div>
<div class="abs" style="left:9px;top:279px;width:11px;height:0;border-top:1px dotted #909090;"></div>
<div class="abs" style="left:4px;top:275px;width:9px;height:9px;box-sizing:border-box;border:1px solid #8a8a94;background:#fff;"><div class="abs" style="left:1px;top:3px;width:5px;height:1px;background:#000;"></div><div class="abs" style="left:3px;top:1px;width:1px;height:5px;background:#000;"></div></div>
<svg class="abs" style="left:20px;top:270px" width="16" height="16" viewBox="0 0 16 16"><text x="1" y="10" font-family="Liberation Sans,sans-serif" font-weight="bold" font-size="11" fill="#b8c4c4">A</text><text x="3" y="12" font-family="Liberation Sans,sans-serif" font-weight="bold" font-size="11" fill="#208080">A</text><text x="6" y="15" font-family="Liberation Sans,sans-serif" font-weight="bold" font-size="11.5" fill="#0000d8">A</text></svg>
<div class="abs tr" style="left:40px;top:271px;">Aperture Tables</div>
<div class="abs" style="left:9px;top:295px;width:11px;height:0;border-top:1px dotted #909090;"></div>
<div class="abs" style="left:4px;top:291px;width:9px;height:9px;box-sizing:border-box;border:1px solid #8a8a94;background:#fff;"><div class="abs" style="left:1px;top:3px;width:5px;height:1px;background:#000;"></div><div class="abs" style="left:3px;top:1px;width:1px;height:5px;background:#000;"></div></div>
<svg class="abs" style="left:20px;top:286px" width="16" height="16" viewBox="0 0 16 16"><text x="1" y="10" font-family="Liberation Sans,sans-serif" font-weight="bold" font-size="11" fill="#b8c4c4">R</text><text x="3" y="12" font-family="Liberation Sans,sans-serif" font-weight="bold" font-size="11" fill="#208080">R</text><text x="6" y="15" font-family="Liberation Sans,sans-serif" font-weight="bold" font-size="11.5" fill="#0000d8">R</text></svg>
<div class="abs tr" style="left:40px;top:287px;">Drill Tables</div>
<div class="abs" style="left:9px;top:311px;width:11px;height:0;border-top:1px dotted #909090;"></div>
<svg class="abs" style="left:20px;top:302px" width="16" height="16" viewBox="0 0 16 16"><text x="1" y="10" font-family="Liberation Sans,sans-serif" font-weight="bold" font-size="11" fill="#b8c4c4">P</text><text x="3" y="12" font-family="Liberation Sans,sans-serif" font-weight="bold" font-size="11" fill="#208080">P</text><text x="6" y="15" font-family="Liberation Sans,sans-serif" font-weight="bold" font-size="11.5" fill="#0000d8">P</text></svg>
<div class="abs tr" style="left:40px;top:303px;">Probe Tables</div>
</div>
<div class="abs" style="left:9px;top:760px;width:140px;height:15px;background:#f2f2f6;"></div>
<div class="abs" style="left:9px;top:760px;width:16px;height:15px;box-sizing:border-box;background:#e2e2e8;border:1px solid;border-color:#fff #70707c #70707c #fff;"><svg class="abs" style="left:3px;top:3px" width="5" height="7" viewBox="0 0 5 7"><path d="M4.5 0V7L0.5 3.5Z" fill="#000"/></svg></div>
<div class="abs" style="left:25px;top:760px;width:91px;height:15px;box-sizing:border-box;background:#e2e2e8;border:1px solid;border-color:#fff #70707c #70707c #fff;"></div>
<div class="abs" style="left:133px;top:760px;width:16px;height:15px;box-sizing:border-box;background:#e2e2e8;border:1px solid;border-color:#fff #70707c #70707c #fff;"><svg class="abs" style="left:5px;top:3px" width="5" height="7" viewBox="0 0 5 7"><path d="M0.5 0V7L4.5 3.5Z" fill="#000"/></svg></div>
<div class="abs" style="left:4px;top:777px;width:1091px;height:18px;background:#e0dfe6;border-top:1px solid #fafafc;box-sizing:border-box;"></div>
<div class="abs" style="left:4px;top:776px;width:1092px;height:1px;background:#a4a4b0;"></div>
<div class="abs" style="left:5px;top:781px;font-size:11.5px;letter-spacing:-0.3px;">Ready</div>
<div class="abs" style="left:1057px;top:780px;width:8px;height:15px;border:1px solid;border-color:#9a9aa6 #fff #fff #9a9aa6;box-sizing:border-box;"></div>
<div class="abs" style="left:1068px;top:780px;width:8px;height:15px;border:1px solid;border-color:#9a9aa6 #fff #fff #9a9aa6;box-sizing:border-box;"></div>
<svg class="abs" style="left:1082px;top:782px" width="13" height="13" viewBox="0 0 13 13"><path d="M12.5 1L1 12.5M12.5 5L5 12.5M12.5 9L9 12.5" stroke="#9a9aa6" stroke-width="1.2"/><path d="M12.5 2L2 12.5M12.5 6L6 12.5M12.5 10L10 12.5" stroke="#fff" stroke-width="1"/></svg>
<div class="abs" style="left:160px;top:83px;width:936px;height:1px;background:#74747c;"></div>
<svg class="abs" style="left:162px;top:84px;background:#000" width="915" height="675" viewBox="162 84 915 675"><rect x="501" y="408" width="122" height="8" fill="#fa8a8c"/><path d="M503.70 409.0v5.0M506.10 409.0v5.0M508.50 409.0v5.0M510.90 409.0v5.0M513.30 409.0v5.0M515.70 409.0v5.0M518.10 409.0v5.0M520.50 409.0v5.0M522.90 409.0v5.0M525.30 409.0v5.0M527.70 409.0v5.0M530.10 409.0v5.0M532.50 409.0v5.0M534.90 409.0v5.0M537.30 409.0v5.0M539.70 409.0v5.0M542.10 409.0v5.0M544.50 409.0v5.0M546.90 409.0v5.0M549.30 409.0v5.0M551.70 409.0v5.0M554.10 409.0v5.0M556.50 409.0v5.0M558.90 409.0v5.0M561.30 409.0v5.0M563.70 409.0v5.0M566.10 409.0v5.0M568.50 409.0v5.0M570.90 409.0v5.0M573.30 409.0v5.0M575.70 409.0v5.0M578.10 409.0v5.0M580.50 409.0v5.0M582.90 409.0v5.0M585.30 409.0v5.0M587.70 409.0v5.0M590.10 409.0v5.0M592.50 409.0v5.0M594.90 409.0v5.0M597.30 409.0v5.0M599.70 409.0v5.0M602.10 409.0v5.0M604.50 409.0v5.0M606.90 409.0v5.0M609.30 409.0v5.0M611.70 409.0v5.0M614.10 409.0v5.0M616.50 409.0v5.0M618.90 409.0v5.0" stroke="#000" stroke-width="1" fill="none" shape-rendering="crispEdges"/><rect x="501" y="549" width="122" height="8" fill="#fa8a8c"/><path d="M503.70 550.0v5.0M506.10 550.0v5.0M508.50 550.0v5.0M510.90 550.0v5.0M513.30 550.0v5.0M515.70 550.0v5.0M518.10 550.0v5.0M520.50 550.0v5.0M522.90 550.0v5.0M525.30 550.0v5.0M527.70 550.0v5.0M530.10 550.0v5.0M532.50 550.0v5.0M534.90 550.0v5.0M537.30 550.0v5.0M539.70 550.0v5.0M542.10 550.0v5.0M544.50 550.0v5.0M546.90 550.0v5.0M549.30 550.0v5.0M551.70 550.0v5.0M554.10 550.0v5.0M556.50 550.0v5.0M558.90 550.0v5.0M561.30 550.0v5.0M563.70 550.0v5.0M566.10 550.0v5.0M568.50 550.0v5.0M570.90 550.0v5.0M573.30 550.0v5.0M575.70 550.0v5.0M578.10 550.0v5.0M580.50 550.0v5.0M582.90 550.0v5.0M585.30 550.0v5.0M587.70 550.0v5.0M590.10 550.0v5.0M592.50 550.0v5.0M594.90 550.0v5.0M597.30 550.0v5.0M599.70 550.0v5.0M602.10 550.0v5.0M604.50 550.0v5.0M606.90 550.0v5.0M609.30 550.0v5.0M611.70 550.0v5.0M614.10 550.0v5.0M616.50 550.0v5.0M618.90 550.0v5.0" stroke="#000" stroke-width="1" fill="none" shape-rendering="crispEdges"/><rect x="488" y="421" width="8" height="122" fill="#fa8a8c"/><path d="M489.0 423.70h5.0M489.0 426.10h5.0M489.0 428.50h5.0M489.0 430.90h5.0M489.0 433.30h5.0M489.0 435.70h5.0M489.0 438.10h5.0M489.0 440.50h5.0M489.0 442.90h5.0M489.0 445.30h5.0M489.0 447.70h5.0M489.0 450.10h5.0M489.0 452.50h5.0M489.0 454.90h5.0M489.0 457.30h5.0M489.0 459.70h5.0M489.0 462.10h5.0M489.0 464.50h5.0M489.0 466.90h5.0M489.0 469.30h5.0M489.0 471.70h5.0M489.0 474.10h5.0M489.0 476.50h5.0M489.0 478.90h5.0M489.0 481.30h5.0M489.0 483.70h5.0M489.0 486.10h5.0M489.0 488.50h5.0M489.0 490.90h5.0M489.0 493.30h5.0M489.0 495.70h5.0M489.0 498.10h5.0M489.0 500.50h5.0M489.0 502.90h5.0M489.0 505.30h5.0M489.0 507.70h5.0M489.0 510.10h5.0M489.0 512.50h5.0M489.0 514.90h5.0M489.0 517.30h5.0M489.0 519.70h5.0M489.0 522.10h5.0M489.0 524.50h5.0M489.0 526.90h5.0M489.0 529.30h5.0M489.0 531.70h5.0M489.0 534.10h5.0M489.0 536.50h5.0M489.0 538.90h5.0" stroke="#000" stroke-width="1" fill="none" shape-rendering="crispEdges"/><rect x="629" y="421" width="8" height="122" fill="#fa8a8c"/><path d="M630.0 423.70h5.0M630.0 426.10h5.0M630.0 428.50h5.0M630.0 430.90h5.0M630.0 433.30h5.0M630.0 435.70h5.0M630.0 438.10h5.0M630.0 440.50h5.0M630.0 442.90h5.0M630.0 445.30h5.0M630.0 447.70h5.0M630.0 450.10h5.0M630.0 452.50h5.0M630.0 454.90h5.0M630.0 457.30h5.0M630.0 459.70h5.0M630.0 462.10h5.0M630.0 464.50h5.0M630.0 466.90h5.0M630.0 469.30h5.0M630.0 471.70h5.0M630.0 474.10h5.0M630.0 476.50h5.0M630.0 478.90h5.0M630.0 481.30h5.0M630.0 483.70h5.0M630.0 486.10h5.0M630.0 488.50h5.0M630.0 490.90h5.0M630.0 493.30h5.0M630.0 495.70h5.0M630.0 498.10h5.0M630.0 500.50h5.0M630.0 502.90h5.0M630.0 505.30h5.0M630.0 507.70h5.0M630.0 510.10h5.0M630.0 512.50h5.0M630.0 514.90h5.0M630.0 517.30h5.0M630.0 519.70h5.0M630.0 522.10h5.0M630.0 524.50h5.0M630.0 526.90h5.0M630.0 529.30h5.0M630.0 531.70h5.0M630.0 534.10h5.0M630.0 536.50h5.0M630.0 538.90h5.0" stroke="#000" stroke-width="1" fill="none" shape-rendering="crispEdges"/><path d="M262.00 125.50a12.50 12.50 0 1 0 25.00 0a12.50 12.50 0 1 0 -25.00 0M266.10 125.50a8.40 8.40 0 1 0 16.80 0a8.40 8.40 0 1 0 -16.80 0M269.50 125.50a5.00 5.00 0 1 0 10.00 0a5.00 5.00 0 1 0 -10.00 0M262.0 125.5L287.0 125.5M274.5 113.0L274.5 138.0M262.00 716.50a12.50 12.50 0 1 0 25.00 0a12.50 12.50 0 1 0 -25.00 0M266.10 716.50a8.40 8.40 0 1 0 16.80 0a8.40 8.40 0 1 0 -16.80 0M269.50 716.50a5.00 5.00 0 1 0 10.00 0a5.00 5.00 0 1 0 -10.00 0M262.0 716.5L287.0 716.5M274.5 704.0L274.5 729.0M274.5 140.0L274.5 302.0M274.5 540.0L274.5 703.0M320.0 122.5L300.5 122.5L292.5 131.0L292.5 150.0M307.50 150.00a12.50 12.50 0 1 0 25.00 0a12.50 12.50 0 1 0 -25.00 0M904.0 122.5L923.0 122.5L931.5 131.0L931.5 150.0M892.50 150.00a12.50 12.50 0 1 0 25.00 0a12.50 12.50 0 1 0 -25.00 0M292.5 692.0L292.5 712.0L301.0 719.5L320.0 719.5M307.50 693.00a12.50 12.50 0 1 0 25.00 0a12.50 12.50 0 1 0 -25.00 0M931.5 692.0L931.5 710.0L924.0 719.5L904.0 719.5M892.50 693.00a12.50 12.50 0 1 0 25.00 0a12.50 12.50 0 1 0 -25.00 0M399.50 138.00a7.50 7.50 0 1 0 15.00 0a7.50 7.50 0 1 0 -15.00 0M399.50 184.00a7.50 7.50 0 1 0 15.00 0a7.50 7.50 0 1 0 -15.00 0M507.50 138.00a7.50 7.50 0 1 0 15.00 0a7.50 7.50 0 1 0 -15.00 0M507.50 184.00a7.50 7.50 0 1 0 15.00 0a7.50 7.50 0 1 0 -15.00 0M431.50 145.00a7.50 7.50 0 1 0 15.00 0a7.50 7.50 0 1 0 -15.00 0M453.50 145.00a7.50 7.50 0 1 0 15.00 0a7.50 7.50 0 1 0 -15.00 0M474.50 145.00a7.50 7.50 0 1 0 15.00 0a7.50 7.50 0 1 0 -15.00 0M431.50 177.00a7.50 7.50 0 1 0 15.00 0a7.50 7.50 0 1 0 -15.00 0M453.50 177.00a7.50 7.50 0 1 0 15.00 0a7.50 7.50 0 1 0 -15.00 0M474.50 177.00a7.50 7.50 0 1 0 15.00 0a7.50 7.50 0 1 0 -15.00 0M327.50 185.50a5.5 5 0 1 0 11 0a5.5 5 0 1 0 -11 0M327.50 198.50a5.5 5 0 1 0 11 0a5.5 5 0 1 0 -11 0M333.5 185.0L333.5 199.0M331.5 191.5L335.5 191.5M331.5 193.5L335.5 193.5M355.50 185.50a5.5 5 0 1 0 11 0a5.5 5 0 1 0 -11 0M355.50 198.50a5.5 5 0 1 0 11 0a5.5 5 0 1 0 -11 0M361.5 185.0L361.5 199.0M359.5 191.5L363.5 191.5M359.5 193.5L363.5 193.5M334.50 214.50a5.5 5 0 1 0 11 0a5.5 5 0 1 0 -11 0M347.50 214.50a5.5 5 0 1 0 11 0a5.5 5 0 1 0 -11 0M340.0 214.5L353.0 214.5M345.5 211.5L345.5 217.5M347.5 211.5L347.5 217.5M301.5 231.5h8v10h-8zM317.5 231.5h8v10h-8zM714.5 248.5h8v10h-8zM714.5 264.5h8v10h-8zM722.5 297.5h8v10h-8zM738.5 297.5h8v10h-8zM874.5 198.5h8v10h-8zM890.5 198.5h8v10h-8zM879.5 265.5h8v10h-8zM895.5 265.5h8v10h-8zM879.5 288.5h8v10h-8zM895.5 288.5h8v10h-8zM879.5 311.5h8v10h-8zM895.5 311.5h8v10h-8zM879.5 335.0h8v10h-8zM895.5 335.0h8v10h-8zM879.5 358.5h8v10h-8zM895.5 358.5h8v10h-8zM879.5 381.5h8v10h-8zM895.5 381.5h8v10h-8zM879.5 405.0h8v10h-8zM895.5 405.0h8v10h-8zM879.5 428.5h8v10h-8zM895.5 428.5h8v10h-8zM341.5 231.5h9.0v10.0h-9.0zM353.50 236.50a5.5 5 0 1 0 11 0a5.5 5 0 1 0 -11 0M365.50 236.50a5.5 5 0 1 0 11 0a5.5 5 0 1 0 -11 0M377.00 236.50a5.5 5 0 1 0 11 0a5.5 5 0 1 0 -11 0M388.50 236.50a5.5 5 0 1 0 11 0a5.5 5 0 1 0 -11 0M412.50 218.50a5.5 5 0 1 0 11 0a5.5 5 0 1 0 -11 0M413.5 225.5h9.0v10.0h-9.0zM432.50 218.50a5.5 5 0 1 0 11 0a5.5 5 0 1 0 -11 0M433.5 225.5h9.0v10.0h-9.0zM456.5 224.5a3.5 3 0 1 0 7 0a3.5 3 0 1 0 -7 0M456.0 228.0h7.0v6.0h-7.0zM462.5 224.5a3.5 3 0 1 0 7 0a3.5 3 0 1 0 -7 0M462.5 230.5a3.5 3 0 1 0 7 0a3.5 3 0 1 0 -7 0M468.5 224.5a3.5 3 0 1 0 7 0a3.5 3 0 1 0 -7 0M468.5 230.5a3.5 3 0 1 0 7 0a3.5 3 0 1 0 -7 0M474.5 224.5a3.5 3 0 1 0 7 0a3.5 3 0 1 0 -7 0M474.5 230.5a3.5 3 0 1 0 7 0a3.5 3 0 1 0 -7 0M480.5 224.5a3.5 3 0 1 0 7 0a3.5 3 0 1 0 -7 0M480.5 230.5a3.5 3 0 1 0 7 0a3.5 3 0 1 0 -7 0M486.5 224.5a3.5 3 0 1 0 7 0a3.5 3 0 1 0 -7 0M486.5 230.5a3.5 3 0 1 0 7 0a3.5 3 0 1 0 -7 0M492.5 224.5a3.5 3 0 1 0 7 0a3.5 3 0 1 0 -7 0M492.5 230.5a3.5 3 0 1 0 7 0a3.5 3 0 1 0 -7 0M498.5 224.5a3.5 3 0 1 0 7 0a3.5 3 0 1 0 -7 0M498.5 230.5a3.5 3 0 1 0 7 0a3.5 3 0 1 0 -7 0M504.5 224.5a3.5 3 0 1 0 7 0a3.5 3 0 1 0 -7 0M504.5 230.5a3.5 3 0 1 0 7 0a3.5 3 0 1 0 -7 0M510.5 224.5a3.5 3 0 1 0 7 0a3.5 3 0 1 0 -7 0M510.5 230.5a3.5 3 0 1 0 7 0a3.5 3 0 1 0 -7 0M516.5 224.5a3.5 3 0 1 0 7 0a3.5 3 0 1 0 -7 0M516.5 230.5a3.5 3 0 1 0 7 0a3.5 3 0 1 0 -7 0M522.5 224.5a3.5 3 0 1 0 7 0a3.5 3 0 1 0 -7 0M522.5 230.5a3.5 3 0 1 0 7 0a3.5 3 0 1 0 -7 0M528.5 224.5a3.5 3 0 1 0 7 0a3.5 3 0 1 0 -7 0M528.5 230.5a3.5 3 0 1 0 7 0a3.5 3 0 1 0 -7 0M573.50 215.50a5.5 5 0 1 0 11 0a5.5 5 0 1 0 -11 0M574.5 222.5h9.0v10.0h-9.0zM585.50 215.50a5.5 5 0 1 0 11 0a5.5 5 0 1 0 -11 0M585.50 227.50a5.5 5 0 1 0 11 0a5.5 5 0 1 0 -11 0M597.50 215.50a5.5 5 0 1 0 11 0a5.5 5 0 1 0 -11 0M597.50 227.50a5.5 5 0 1 0 11 0a5.5 5 0 1 0 -11 0M609.50 215.50a5.5 5 0 1 0 11 0a5.5 5 0 1 0 -11 0M609.50 227.50a5.5 5 0 1 0 11 0a5.5 5 0 1 0 -11 0M621.50 215.50a5.5 5 0 1 0 11 0a5.5 5 0 1 0 -11 0M621.50 227.50a5.5 5 0 1 0 11 0a5.5 5 0 1 0 -11 0M633.50 215.50a5.5 5 0 1 0 11 0a5.5 5 0 1 0 -11 0M633.50 227.50a5.5 5 0 1 0 11 0a5.5 5 0 1 0 -11 0M645.50 215.50a5.5 5 0 1 0 11 0a5.5 5 0 1 0 -11 0M645.50 227.50a5.5 5 0 1 0 11 0a5.5 5 0 1 0 -11 0M657.50 215.50a5.5 5 0 1 0 11 0a5.5 5 0 1 0 -11 0M657.50 227.50a5.5 5 0 1 0 11 0a5.5 5 0 1 0 -11 0M669.50 215.50a5.5 5 0 1 0 11 0a5.5 5 0 1 0 -11 0M669.50 227.50a5.5 5 0 1 0 11 0a5.5 5 0 1 0 -11 0M681.50 215.50a5.5 5 0 1 0 11 0a5.5 5 0 1 0 -11 0M681.50 227.50a5.5 5 0 1 0 11 0a5.5 5 0 1 0 -11 0M693.50 215.50a5.5 5 0 1 0 11 0a5.5 5 0 1 0 -11 0M693.50 227.50a5.5 5 0 1 0 11 0a5.5 5 0 1 0 -11 0M705.50 215.50a5.5 5 0 1 0 11 0a5.5 5 0 1 0 -11 0M705.50 227.50a5.5 5 0 1 0 11 0a5.5 5 0 1 0 -11 0M717.50 215.50a5.5 5 0 1 0 11 0a5.5 5 0 1 0 -11 0M717.50 227.50a5.5 5 0 1 0 11 0a5.5 5 0 1 0 -11 0M406.50 291.00a5.5 5.5 0 1 0 11 0a5.5 5.5 0 1 0 -11 0M406.50 303.00a5.5 5.5 0 1 0 11 0a5.5 5.5 0 1 0 -11 0M418.50 291.00a5.5 5.5 0 1 0 11 0a5.5 5.5 0 1 0 -11 0M418.50 303.00a5.5 5.5 0 1 0 11 0a5.5 5.5 0 1 0 -11 0M430.50 291.00a5.5 5.5 0 1 0 11 0a5.5 5.5 0 1 0 -11 0M430.50 303.00a5.5 5.5 0 1 0 11 0a5.5 5.5 0 1 0 -11 0M442.50 291.00a5.5 5.5 0 1 0 11 0a5.5 5.5 0 1 0 -11 0M442.50 303.00a5.5 5.5 0 1 0 11 0a5.5 5.5 0 1 0 -11 0M454.50 291.00a5.5 5.5 0 1 0 11 0a5.5 5.5 0 1 0 -11 0M454.50 303.00a5.5 5.5 0 1 0 11 0a5.5 5.5 0 1 0 -11 0M466.50 291.00a5.5 5.5 0 1 0 11 0a5.5 5.5 0 1 0 -11 0M466.50 303.00a5.5 5.5 0 1 0 11 0a5.5 5.5 0 1 0 -11 0M478.50 291.00a5.5 5.5 0 1 0 11 0a5.5 5.5 0 1 0 -11 0M478.50 303.00a5.5 5.5 0 1 0 11 0a5.5 5.5 0 1 0 -11 0M490.00 291.00a5.5 5.5 0 1 0 11 0a5.5 5.5 0 1 0 -11 0M490.00 303.00a5.5 5.5 0 1 0 11 0a5.5 5.5 0 1 0 -11 0M502.00 291.00a5.5 5.5 0 1 0 11 0a5.5 5.5 0 1 0 -11 0M502.00 303.00a5.5 5.5 0 1 0 11 0a5.5 5.5 0 1 0 -11 0M514.00 291.00a5.5 5.5 0 1 0 11 0a5.5 5.5 0 1 0 -11 0M514.00 303.00a5.5 5.5 0 1 0 11 0a5.5 5.5 0 1 0 -11 0M526.00 291.00a5.5 5.5 0 1 0 11 0a5.5 5.5 0 1 0 -11 0M526.00 303.00a5.5 5.5 0 1 0 11 0a5.5 5.5 0 1 0 -11 0M538.00 291.00a5.5 5.5 0 1 0 11 0a5.5 5.5 0 1 0 -11 0M538.00 303.00a5.5 5.5 0 1 0 11 0a5.5 5.5 0 1 0 -11 0M550.00 291.00a5.5 5.5 0 1 0 11 0a5.5 5.5 0 1 0 -11 0M550.00 303.00a5.5 5.5 0 1 0 11 0a5.5 5.5 0 1 0 -11 0M562.00 291.00a5.5 5.5 0 1 0 11 0a5.5 5.5 0 1 0 -11 0M562.00 303.00a5.5 5.5 0 1 0 11 0a5.5 5.5 0 1 0 -11 0M574.00 291.00a5.5 5.5 0 1 0 11 0a5.5 5.5 0 1 0 -11 0M574.00 303.00a5.5 5.5 0 1 0 11 0a5.5 5.5 0 1 0 -11 0M586.00 291.00a5.5 5.5 0 1 0 11 0a5.5 5.5 0 1 0 -11 0M586.00 303.00a5.5 5.5 0 1 0 11 0a5.5 5.5 0 1 0 -11 0M598.00 291.00a5.5 5.5 0 1 0 11 0a5.5 5.5 0 1 0 -11 0M598.00 303.00a5.5 5.5 0 1 0 11 0a5.5 5.5 0 1 0 -11 0M610.00 291.00a5.5 5.5 0 1 0 11 0a5.5 5.5 0 1 0 -11 0M610.00 303.00a5.5 5.5 0 1 0 11 0a5.5 5.5 0 1 0 -11 0M622.00 291.00a5.5 5.5 0 1 0 11 0a5.5 5.5 0 1 0 -11 0M622.00 303.00a5.5 5.5 0 1 0 11 0a5.5 5.5 0 1 0 -11 0M633.50 291.00a5.5 5.5 0 1 0 11 0a5.5 5.5 0 1 0 -11 0M633.50 303.00a5.5 5.5 0 1 0 11 0a5.5 5.5 0 1 0 -11 0M645.50 291.00a5.5 5.5 0 1 0 11 0a5.5 5.5 0 1 0 -11 0M645.50 303.00a5.5 5.5 0 1 0 11 0a5.5 5.5 0 1 0 -11 0M657.50 291.00a5.5 5.5 0 1 0 11 0a5.5 5.5 0 1 0 -11 0M657.50 303.00a5.5 5.5 0 1 0 11 0a5.5 5.5 0 1 0 -11 0M669.50 291.00a5.5 5.5 0 1 0 11 0a5.5 5.5 0 1 0 -11 0M669.50 303.00a5.5 5.5 0 1 0 11 0a5.5 5.5 0 1 0 -11 0M681.50 291.00a5.5 5.5 0 1 0 11 0a5.5 5.5 0 1 0 -11 0M681.50 303.00a5.5 5.5 0 1 0 11 0a5.5 5.5 0 1 0 -11 0M693.50 291.00a5.5 5.5 0 1 0 11 0a5.5 5.5 0 1 0 -11 0M693.50 303.00a5.5 5.5 0 1 0 11 0a5.5 5.5 0 1 0 -11 0M706.5 286.5h9.0v9.0h-9.0zM705.50 303.00a5.5 5.5 0 1 0 11 0a5.5 5.5 0 1 0 -11 0M412.50 648.50a5.5 5 0 1 0 11 0a5.5 5 0 1 0 -11 0M413.5 655.5h9.0v10.0h-9.0zM424.50 648.50a5.5 5 0 1 0 11 0a5.5 5 0 1 0 -11 0M424.50 660.50a5.5 5 0 1 0 11 0a5.5 5 0 1 0 -11 0M436.50 648.50a5.5 5 0 1 0 11 0a5.5 5 0 1 0 -11 0M436.50 660.50a5.5 5 0 1 0 11 0a5.5 5 0 1 0 -11 0M448.50 648.50a5.5 5 0 1 0 11 0a5.5 5 0 1 0 -11 0M448.50 660.50a5.5 5 0 1 0 11 0a5.5 5 0 1 0 -11 0M460.50 648.50a5.5 5 0 1 0 11 0a5.5 5 0 1 0 -11 0M460.50 660.50a5.5 5 0 1 0 11 0a5.5 5 0 1 0 -11 0M472.50 648.50a5.5 5 0 1 0 11 0a5.5 5 0 1 0 -11 0M472.50 660.50a5.5 5 0 1 0 11 0a5.5 5 0 1 0 -11 0M484.50 648.50a5.5 5 0 1 0 11 0a5.5 5 0 1 0 -11 0M484.50 660.50a5.5 5 0 1 0 11 0a5.5 5 0 1 0 -11 0M496.00 648.50a5.5 5 0 1 0 11 0a5.5 5 0 1 0 -11 0M496.00 660.50a5.5 5 0 1 0 11 0a5.5 5 0 1 0 -11 0M508.00 648.50a5.5 5 0 1 0 11 0a5.5 5 0 1 0 -11 0M508.00 660.50a5.5 5 0 1 0 11 0a5.5 5 0 1 0 -11 0M520.00 648.50a5.5 5 0 1 0 11 0a5.5 5 0 1 0 -11 0M520.00 660.50a5.5 5 0 1 0 11 0a5.5 5 0 1 0 -11 0M532.00 648.50a5.5 5 0 1 0 11 0a5.5 5 0 1 0 -11 0M532.00 660.50a5.5 5 0 1 0 11 0a5.5 5 0 1 0 -11 0M544.00 648.50a5.5 5 0 1 0 11 0a5.5 5 0 1 0 -11 0M544.00 660.50a5.5 5 0 1 0 11 0a5.5 5 0 1 0 -11 0M556.00 648.50a5.5 5 0 1 0 11 0a5.5 5 0 1 0 -11 0M556.00 660.50a5.5 5 0 1 0 11 0a5.5 5 0 1 0 -11 0M568.00 648.50a5.5 5 0 1 0 11 0a5.5 5 0 1 0 -11 0M568.00 660.50a5.5 5 0 1 0 11 0a5.5 5 0 1 0 -11 0M580.00 648.50a5.5 5 0 1 0 11 0a5.5 5 0 1 0 -11 0M580.00 660.50a5.5 5 0 1 0 11 0a5.5 5 0 1 0 -11 0M592.00 648.50a5.5 5 0 1 0 11 0a5.5 5 0 1 0 -11 0M592.00 660.50a5.5 5 0 1 0 11 0a5.5 5 0 1 0 -11 0M604.00 648.50a5.5 5 0 1 0 11 0a5.5 5 0 1 0 -11 0M604.00 660.50a5.5 5 0 1 0 11 0a5.5 5 0 1 0 -11 0M616.00 648.50a5.5 5 0 1 0 11 0a5.5 5 0 1 0 -11 0M616.00 660.50a5.5 5 0 1 0 11 0a5.5 5 0 1 0 -11 0M628.00 648.50a5.5 5 0 1 0 11 0a5.5 5 0 1 0 -11 0M628.00 660.50a5.5 5 0 1 0 11 0a5.5 5 0 1 0 -11 0M639.50 648.50a5.5 5 0 1 0 11 0a5.5 5 0 1 0 -11 0M639.50 660.50a5.5 5 0 1 0 11 0a5.5 5 0 1 0 -11 0M651.50 648.50a5.5 5 0 1 0 11 0a5.5 5 0 1 0 -11 0M651.50 660.50a5.5 5 0 1 0 11 0a5.5 5 0 1 0 -11 0M663.50 648.50a5.5 5 0 1 0 11 0a5.5 5 0 1 0 -11 0M663.50 660.50a5.5 5 0 1 0 11 0a5.5 5 0 1 0 -11 0M675.50 648.50a5.5 5 0 1 0 11 0a5.5 5 0 1 0 -11 0M675.50 660.50a5.5 5 0 1 0 11 0a5.5 5 0 1 0 -11 0M687.50 648.50a5.5 5 0 1 0 11 0a5.5 5 0 1 0 -11 0M687.50 660.50a5.5 5 0 1 0 11 0a5.5 5 0 1 0 -11 0M699.50 648.50a5.5 5 0 1 0 11 0a5.5 5 0 1 0 -11 0M699.50 660.50a5.5 5 0 1 0 11 0a5.5 5 0 1 0 -11 0M711.50 648.50a5.5 5 0 1 0 11 0a5.5 5 0 1 0 -11 0M711.50 660.50a5.5 5 0 1 0 11 0a5.5 5 0 1 0 -11 0M347.5 330.5h9.0v9.0h-9.0zM359.50 335.00a5.5 5.5 0 1 0 11 0a5.5 5.5 0 1 0 -11 0M347.50 347.00a5.5 5.5 0 1 0 11 0a5.5 5.5 0 1 0 -11 0M359.50 347.00a5.5 5.5 0 1 0 11 0a5.5 5.5 0 1 0 -11 0M347.50 359.00a5.5 5.5 0 1 0 11 0a5.5 5.5 0 1 0 -11 0M359.50 359.00a5.5 5.5 0 1 0 11 0a5.5 5.5 0 1 0 -11 0M347.50 371.00a5.5 5.5 0 1 0 11 0a5.5 5.5 0 1 0 -11 0M359.50 371.00a5.5 5.5 0 1 0 11 0a5.5 5.5 0 1 0 -11 0M347.50 383.00a5.5 5.5 0 1 0 11 0a5.5 5.5 0 1 0 -11 0M359.50 383.00a5.5 5.5 0 1 0 11 0a5.5 5.5 0 1 0 -11 0M347.50 395.00a5.5 5.5 0 1 0 11 0a5.5 5.5 0 1 0 -11 0M359.50 395.00a5.5 5.5 0 1 0 11 0a5.5 5.5 0 1 0 -11 0M347.50 406.00a5.5 5.5 0 1 0 11 0a5.5 5.5 0 1 0 -11 0M359.50 406.00a5.5 5.5 0 1 0 11 0a5.5 5.5 0 1 0 -11 0M347.50 418.00a5.5 5.5 0 1 0 11 0a5.5 5.5 0 1 0 -11 0M359.50 418.00a5.5 5.5 0 1 0 11 0a5.5 5.5 0 1 0 -11 0M347.50 430.00a5.5 5.5 0 1 0 11 0a5.5 5.5 0 1 0 -11 0M359.50 430.00a5.5 5.5 0 1 0 11 0a5.5 5.5 0 1 0 -11 0M347.50 442.00a5.5 5.5 0 1 0 11 0a5.5 5.5 0 1 0 -11 0M359.50 442.00a5.5 5.5 0 1 0 11 0a5.5 5.5 0 1 0 -11 0M347.50 454.00a5.5 5.5 0 1 0 11 0a5.5 5.5 0 1 0 -11 0M359.50 454.00a5.5 5.5 0 1 0 11 0a5.5 5.5 0 1 0 -11 0M347.50 466.00a5.5 5.5 0 1 0 11 0a5.5 5.5 0 1 0 -11 0M359.50 466.00a5.5 5.5 0 1 0 11 0a5.5 5.5 0 1 0 -11 0M347.50 478.00a5.5 5.5 0 1 0 11 0a5.5 5.5 0 1 0 -11 0M359.50 478.00a5.5 5.5 0 1 0 11 0a5.5 5.5 0 1 0 -11 0M347.50 490.00a5.5 5.5 0 1 0 11 0a5.5 5.5 0 1 0 -11 0M359.50 490.00a5.5 5.5 0 1 0 11 0a5.5 5.5 0 1 0 -11 0M347.50 502.00a5.5 5.5 0 1 0 11 0a5.5 5.5 0 1 0 -11 0M359.50 502.00a5.5 5.5 0 1 0 11 0a5.5 5.5 0 1 0 -11 0M347.50 514.00a5.5 5.5 0 1 0 11 0a5.5 5.5 0 1 0 -11 0M359.50 514.00a5.5 5.5 0 1 0 11 0a5.5 5.5 0 1 0 -11 0M347.50 526.00a5.5 5.5 0 1 0 11 0a5.5 5.5 0 1 0 -11 0M359.50 526.00a5.5 5.5 0 1 0 11 0a5.5 5.5 0 1 0 -11 0M347.50 538.00a5.5 5.5 0 1 0 11 0a5.5 5.5 0 1 0 -11 0M359.50 538.00a5.5 5.5 0 1 0 11 0a5.5 5.5 0 1 0 -11 0M347.50 550.00a5.5 5.5 0 1 0 11 0a5.5 5.5 0 1 0 -11 0M359.50 550.00a5.5 5.5 0 1 0 11 0a5.5 5.5 0 1 0 -11 0M347.50 562.00a5.5 5.5 0 1 0 11 0a5.5 5.5 0 1 0 -11 0M359.50 562.00a5.5 5.5 0 1 0 11 0a5.5 5.5 0 1 0 -11 0M347.50 574.00a5.5 5.5 0 1 0 11 0a5.5 5.5 0 1 0 -11 0M359.50 574.00a5.5 5.5 0 1 0 11 0a5.5 5.5 0 1 0 -11 0M347.50 586.00a5.5 5.5 0 1 0 11 0a5.5 5.5 0 1 0 -11 0M359.50 586.00a5.5 5.5 0 1 0 11 0a5.5 5.5 0 1 0 -11 0M347.50 598.00a5.5 5.5 0 1 0 11 0a5.5 5.5 0 1 0 -11 0M359.50 598.00a5.5 5.5 0 1 0 11 0a5.5 5.5 0 1 0 -11 0M347.50 610.00a5.5 5.5 0 1 0 11 0a5.5 5.5 0 1 0 -11 0M359.50 610.00a5.5 5.5 0 1 0 11 0a5.5 5.5 0 1 0 -11 0M347.50 622.00a5.5 5.5 0 1 0 11 0a5.5 5.5 0 1 0 -11 0M359.50 622.00a5.5 5.5 0 1 0 11 0a5.5 5.5 0 1 0 -11 0M347.50 634.00a5.5 5.5 0 1 0 11 0a5.5 5.5 0 1 0 -11 0M359.50 634.00a5.5 5.5 0 1 0 11 0a5.5 5.5 0 1 0 -11 0M758.50 328.50a5.5 5 0 1 0 11 0a5.5 5 0 1 0 -11 0M770.50 328.50a5.5 5 0 1 0 11 0a5.5 5 0 1 0 -11 0M758.50 340.50a5.5 5 0 1 0 11 0a5.5 5 0 1 0 -11 0M770.50 340.50a5.5 5 0 1 0 11 0a5.5 5 0 1 0 -11 0M758.50 352.50a5.5 5 0 1 0 11 0a5.5 5 0 1 0 -11 0M770.50 352.50a5.5 5 0 1 0 11 0a5.5 5 0 1 0 -11 0M758.50 364.50a5.5 5 0 1 0 11 0a5.5 5 0 1 0 -11 0M770.50 364.50a5.5 5 0 1 0 11 0a5.5 5 0 1 0 -11 0M758.50 376.50a5.5 5 0 1 0 11 0a5.5 5 0 1 0 -11 0M770.50 376.50a5.5 5 0 1 0 11 0a5.5 5 0 1 0 -11 0M758.50 388.50a5.5 5 0 1 0 11 0a5.5 5 0 1 0 -11 0M770.50 388.50a5.5 5 0 1 0 11 0a5.5 5 0 1 0 -11 0M758.50 400.50a5.5 5 0 1 0 11 0a5.5 5 0 1 0 -11 0M770.50 400.50a5.5 5 0 1 0 11 0a5.5 5 0 1 0 -11 0M758.50 412.50a5.5 5 0 1 0 11 0a5.5 5 0 1 0 -11 0M770.50 412.50a5.5 5 0 1 0 11 0a5.5 5 0 1 0 -11 0M758.50 424.50a5.5 5 0 1 0 11 0a5.5 5 0 1 0 -11 0M770.50 424.50a5.5 5 0 1 0 11 0a5.5 5 0 1 0 -11 0M758.50 436.50a5.5 5 0 1 0 11 0a5.5 5 0 1 0 -11 0M770.50 436.50a5.5 5 0 1 0 11 0a5.5 5 0 1 0 -11 0M758.50 448.50a5.5 5 0 1 0 11 0a5.5 5 0 1 0 -11 0M770.50 448.50a5.5 5 0 1 0 11 0a5.5 5 0 1 0 -11 0M758.50 460.50a5.5 5 0 1 0 11 0a5.5 5 0 1 0 -11 0M770.50 460.50a5.5 5 0 1 0 11 0a5.5 5 0 1 0 -11 0M758.50 472.50a5.5 5 0 1 0 11 0a5.5 5 0 1 0 -11 0M770.50 472.50a5.5 5 0 1 0 11 0a5.5 5 0 1 0 -11 0M758.50 484.50a5.5 5 0 1 0 11 0a5.5 5 0 1 0 -11 0M770.50 484.50a5.5 5 0 1 0 11 0a5.5 5 0 1 0 -11 0M758.50 496.50a5.5 5 0 1 0 11 0a5.5 5 0 1 0 -11 0M770.50 496.50a5.5 5 0 1 0 11 0a5.5 5 0 1 0 -11 0M758.50 508.50a5.5 5 0 1 0 11 0a5.5 5 0 1 0 -11 0M770.50 508.50a5.5 5 0 1 0 11 0a5.5 5 0 1 0 -11 0M758.50 520.50a5.5 5 0 1 0 11 0a5.5 5 0 1 0 -11 0M770.50 520.50a5.5 5 0 1 0 11 0a5.5 5 0 1 0 -11 0M758.50 532.50a5.5 5 0 1 0 11 0a5.5 5 0 1 0 -11 0M770.50 532.50a5.5 5 0 1 0 11 0a5.5 5 0 1 0 -11 0M758.50 544.50a5.5 5 0 1 0 11 0a5.5 5 0 1 0 -11 0M770.50 544.50a5.5 5 0 1 0 11 0a5.5 5 0 1 0 -11 0M758.50 555.50a5.5 5 0 1 0 11 0a5.5 5 0 1 0 -11 0M770.50 555.50a5.5 5 0 1 0 11 0a5.5 5 0 1 0 -11 0M758.50 567.50a5.5 5 0 1 0 11 0a5.5 5 0 1 0 -11 0M770.50 567.50a5.5 5 0 1 0 11 0a5.5 5 0 1 0 -11 0M758.50 579.50a5.5 5 0 1 0 11 0a5.5 5 0 1 0 -11 0M770.50 579.50a5.5 5 0 1 0 11 0a5.5 5 0 1 0 -11 0M758.50 591.50a5.5 5 0 1 0 11 0a5.5 5 0 1 0 -11 0M770.50 591.50a5.5 5 0 1 0 11 0a5.5 5 0 1 0 -11 0M758.50 603.50a5.5 5 0 1 0 11 0a5.5 5 0 1 0 -11 0M770.50 603.50a5.5 5 0 1 0 11 0a5.5 5 0 1 0 -11 0M758.50 615.50a5.5 5 0 1 0 11 0a5.5 5 0 1 0 -11 0M770.50 615.50a5.5 5 0 1 0 11 0a5.5 5 0 1 0 -11 0M758.50 627.50a5.5 5 0 1 0 11 0a5.5 5 0 1 0 -11 0M771.5 622.5h9.0v10.0h-9.0zM302.50 281.50a5.5 5 0 1 0 11 0a5.5 5 0 1 0 -11 0M302.50 293.50a5.5 5 0 1 0 11 0a5.5 5 0 1 0 -11 0M303.5 300.5h9.0v10.0h-9.0zM881.50 215.50a5.5 5 0 1 0 11 0a5.5 5 0 1 0 -11 0M839.5 218.5h9.0v10.0h-9.0zM850.50 224.50a5.5 5 0 1 0 11 0a5.5 5 0 1 0 -11 0M866.50 224.50a5.5 5 0 1 0 11 0a5.5 5 0 1 0 -11 0M896.50 224.50a5.5 5 0 1 0 11 0a5.5 5 0 1 0 -11 0M867.0 240.5h9.0v10.0h-9.0zM896.50 245.50a5.5 5 0 1 0 11 0a5.5 5 0 1 0 -11 0M822.50 270.50a5.5 5 0 1 0 11 0a5.5 5 0 1 0 -11 0M835.5 265.5h9.0v10.0h-9.0zM822.50 293.50a5.5 5 0 1 0 11 0a5.5 5 0 1 0 -11 0M835.5 288.5h9.0v10.0h-9.0zM822.50 316.50a5.5 5 0 1 0 11 0a5.5 5 0 1 0 -11 0M835.5 311.5h9.0v10.0h-9.0zM822.50 340.00a5.5 5 0 1 0 11 0a5.5 5 0 1 0 -11 0M835.5 335.0h9.0v10.0h-9.0zM822.50 363.50a5.5 5 0 1 0 11 0a5.5 5 0 1 0 -11 0M835.5 358.5h9.0v10.0h-9.0zM822.50 386.50a5.5 5 0 1 0 11 0a5.5 5 0 1 0 -11 0M835.5 381.5h9.0v10.0h-9.0zM822.50 410.00a5.5 5 0 1 0 11 0a5.5 5 0 1 0 -11 0M835.5 405.0h9.0v10.0h-9.0zM822.50 433.50a5.5 5 0 1 0 11 0a5.5 5 0 1 0 -11 0M835.5 428.5h9.0v10.0h-9.0zM822.50 466.00a5.5 5 0 1 0 11 0a5.5 5 0 1 0 -11 0M835.5 461.0h9.0v10.0h-9.0zM822.50 513.50a5.5 5 0 1 0 11 0a5.5 5 0 1 0 -11 0M835.5 508.5h9.0v10.0h-9.0zM822.50 561.00a5.5 5 0 1 0 11 0a5.5 5 0 1 0 -11 0M835.5 556.0h9.0v10.0h-9.0zM822.50 609.50a5.5 5 0 1 0 11 0a5.5 5 0 1 0 -11 0M835.5 604.5h9.0v10.0h-9.0zM817.00 635.50a5.5 5 0 1 0 11 0a5.5 5 0 1 0 -11 0M830.0 630.5h9.0v10.0h-9.0zM887.50 451.50a5.5 5 0 1 0 11 0a5.5 5 0 1 0 -11 0M872.50 459.50a5.5 5 0 1 0 11 0a5.5 5 0 1 0 -11 0M902.50 459.50a5.5 5 0 1 0 11 0a5.5 5 0 1 0 -11 0M872.5 476.5h10.0v9.0h-10.0zM902.50 481.50a5.5 5 0 1 0 11 0a5.5 5 0 1 0 -11 0M887.50 499.50a5.5 5 0 1 0 11 0a5.5 5 0 1 0 -11 0M872.50 507.50a5.5 5 0 1 0 11 0a5.5 5 0 1 0 -11 0M902.50 507.50a5.5 5 0 1 0 11 0a5.5 5 0 1 0 -11 0M872.5 524.5h10.0v9.0h-10.0zM902.50 529.50a5.5 5 0 1 0 11 0a5.5 5 0 1 0 -11 0M887.50 546.50a5.5 5 0 1 0 11 0a5.5 5 0 1 0 -11 0M872.50 554.50a5.5 5 0 1 0 11 0a5.5 5 0 1 0 -11 0M902.50 554.50a5.5 5 0 1 0 11 0a5.5 5 0 1 0 -11 0M872.5 571.5h10.0v9.0h-10.0zM902.50 576.50a5.5 5 0 1 0 11 0a5.5 5 0 1 0 -11 0M887.50 594.50a5.5 5 0 1 0 11 0a5.5 5 0 1 0 -11 0M872.50 602.50a5.5 5 0 1 0 11 0a5.5 5 0 1 0 -11 0M902.50 602.50a5.5 5 0 1 0 11 0a5.5 5 0 1 0 -11 0M872.5 619.5h10.0v9.0h-10.0zM902.50 624.50a5.5 5 0 1 0 11 0a5.5 5 0 1 0 -11 0" fill="none" stroke="#e8929a" stroke-width="1" shape-rendering="crispEdges"/><path d="M300.0 231.0h2v1h-2zM309.0 231.0h2v1h-2zM300.0 241.0h2v1h-2zM309.0 241.0h2v1h-2zM305.0 235.0h1v3h-1zM316.0 231.0h2v1h-2zM325.0 231.0h2v1h-2zM316.0 241.0h2v1h-2zM325.0 241.0h2v1h-2zM321.0 235.0h1v3h-1zM713.0 248.0h2v1h-2zM722.0 248.0h2v1h-2zM713.0 258.0h2v1h-2zM722.0 258.0h2v1h-2zM718.0 252.0h1v3h-1zM713.0 264.0h2v1h-2zM722.0 264.0h2v1h-2zM713.0 274.0h2v1h-2zM722.0 274.0h2v1h-2zM718.0 268.0h1v3h-1zM721.0 297.0h2v1h-2zM730.0 297.0h2v1h-2zM721.0 307.0h2v1h-2zM730.0 307.0h2v1h-2zM726.0 301.0h1v3h-1zM737.0 297.0h2v1h-2zM746.0 297.0h2v1h-2zM737.0 307.0h2v1h-2zM746.0 307.0h2v1h-2zM742.0 301.0h1v3h-1zM873.0 198.0h2v1h-2zM882.0 198.0h2v1h-2zM873.0 208.0h2v1h-2zM882.0 208.0h2v1h-2zM878.0 202.0h1v3h-1zM889.0 198.0h2v1h-2zM898.0 198.0h2v1h-2zM889.0 208.0h2v1h-2zM898.0 208.0h2v1h-2zM894.0 202.0h1v3h-1zM878.0 265.0h2v1h-2zM887.0 265.0h2v1h-2zM878.0 275.0h2v1h-2zM887.0 275.0h2v1h-2zM883.0 269.0h1v3h-1zM894.0 265.0h2v1h-2zM903.0 265.0h2v1h-2zM894.0 275.0h2v1h-2zM903.0 275.0h2v1h-2zM899.0 269.0h1v3h-1zM878.0 288.0h2v1h-2zM887.0 288.0h2v1h-2zM878.0 298.0h2v1h-2zM887.0 298.0h2v1h-2zM883.0 292.0h1v3h-1zM894.0 288.0h2v1h-2zM903.0 288.0h2v1h-2zM894.0 298.0h2v1h-2zM903.0 298.0h2v1h-2zM899.0 292.0h1v3h-1zM878.0 311.0h2v1h-2zM887.0 311.0h2v1h-2zM878.0 321.0h2v1h-2zM887.0 321.0h2v1h-2zM883.0 315.0h1v3h-1zM894.0 311.0h2v1h-2zM903.0 311.0h2v1h-2zM894.0 321.0h2v1h-2zM903.0 321.0h2v1h-2zM899.0 315.0h1v3h-1zM878.0 334.5h2v1h-2zM887.0 334.5h2v1h-2zM878.0 344.5h2v1h-2zM887.0 344.5h2v1h-2zM883.0 338.5h1v3h-1zM894.0 334.5h2v1h-2zM903.0 334.5h2v1h-2zM894.0 344.5h2v1h-2zM903.0 344.5h2v1h-2zM899.0 338.5h1v3h-1zM878.0 358.0h2v1h-2zM887.0 358.0h2v1h-2zM878.0 368.0h2v1h-2zM887.0 368.0h2v1h-2zM883.0 362.0h1v3h-1zM894.0 358.0h2v1h-2zM903.0 358.0h2v1h-2zM894.0 368.0h2v1h-2zM903.0 368.0h2v1h-2zM899.0 362.0h1v3h-1zM878.0 381.0h2v1h-2zM887.0 381.0h2v1h-2zM878.0 391.0h2v1h-2zM887.0 391.0h2v1h-2zM883.0 385.0h1v3h-1zM894.0 381.0h2v1h-2zM903.0 381.0h2v1h-2zM894.0 391.0h2v1h-2zM903.0 391.0h2v1h-2zM899.0 385.0h1v3h-1zM878.0 404.5h2v1h-2zM887.0 404.5h2v1h-2zM878.0 414.5h2v1h-2zM887.0 414.5h2v1h-2zM883.0 408.5h1v3h-1zM894.0 404.5h2v1h-2zM903.0 404.5h2v1h-2zM894.0 414.5h2v1h-2zM903.0 414.5h2v1h-2zM899.0 408.5h1v3h-1zM878.0 428.0h2v1h-2zM887.0 428.0h2v1h-2zM878.0 438.0h2v1h-2zM887.0 438.0h2v1h-2zM883.0 432.0h1v3h-1zM894.0 428.0h2v1h-2zM903.0 428.0h2v1h-2zM894.0 438.0h2v1h-2zM903.0 438.0h2v1h-2zM899.0 432.0h1v3h-1z" fill="#e8929a" shape-rendering="crispEdges"/><circle cx="835" cy="657.0" r="3" fill="none" stroke="#e8929a" stroke-width="1.1"/><path d="M836 657.0L838 653.5V660.5Z" fill="#ff8080"/><rect x="838" y="646" width="8" height="23" fill="#ff8080"/><circle cx="873" cy="657.0" r="3" fill="none" stroke="#e8929a" stroke-width="1.1"/><path d="M872 657.0L869 653.5V660.5Z" fill="#ff8080"/><rect x="861" y="646" width="8" height="23" fill="#ff8080"/><circle cx="835" cy="690.5" r="3" fill="none" stroke="#e8929a" stroke-width="1.1"/><path d="M836 690.5L838 687.0V694.0Z" fill="#ff8080"/><rect x="838" y="679" width="8" height="24" fill="#ff8080"/><circle cx="873" cy="690.5" r="3" fill="none" stroke="#e8929a" stroke-width="1.1"/><path d="M872 690.5L869 687.0V694.0Z" fill="#ff8080"/><rect x="861" y="679" width="8" height="24" fill="#ff8080"/><text transform="translate(281.5 526.5) rotate(-90)" font-family="DejaVu Sans Mono,Liberation Mono,monospace" font-size="17.6" textLength="208.95" lengthAdjust="spacingAndGlyphs" fill="#e8929a" stroke="#000" stroke-width="0.4" xml:space="preserve">4.950 Between Targets</text><text transform="translate(974.5 472) rotate(-90)" font-family="DejaVu Sans Mono,Liberation Mono,monospace" font-size="15" textLength="208" lengthAdjust="spacingAndGlyphs" fill="#e8929a" stroke="#000" stroke-width="0.4" xml:space="preserve">Soldermask Component Side</text><text transform="translate(941.5 593) rotate(-90)" font-family="DejaVu Sans Mono,Liberation Mono,monospace" font-size="15" textLength="83.2" lengthAdjust="spacingAndGlyphs" fill="#e8929a" stroke="#000" stroke-width="0.4" xml:space="preserve">Crop Marks</text><text transform="translate(941.5 687) rotate(-90)" font-family="DejaVu Sans Mono,Liberation Mono,monospace" font-size="15" textLength="58.24" lengthAdjust="spacingAndGlyphs" fill="#e8929a" stroke="#000" stroke-width="0.4" xml:space="preserve">Targets</text><text transform="translate(974.5 687) rotate(-90)" font-family="DejaVu Sans Mono,Liberation Mono,monospace" font-size="15" textLength="133.12" lengthAdjust="spacingAndGlyphs" fill="#e8929a" stroke="#000" stroke-width="0.4" xml:space="preserve">Flash Soldermask</text><path d="M1020 92.5H1077M1050.5 84V123" stroke="#fff" stroke-width="1" fill="none" shape-rendering="crispEdges"/></svg>
<div class="abs" style="left:1077px;top:84px;width:19px;height:675px;background:linear-gradient(90deg,#e8e8ee 0,#f6f6fa 3px,#ffffff 9px,#f2f2f6 17px);"></div>
<div class="abs" style="left:162px;top:759px;width:934px;height:18px;background:linear-gradient(#ffffff 0,#fbfbfd 6px,#ececf2 14px,#e4e4ea 18px);"></div>
<div class="abs" style="left:1078px;top:759px;width:18px;height:18px;background:#e6e6ec;"></div>
<div class="abs" style="left:1078px;top:85px;width:16px;height:16px;box-sizing:border-box;border:1px solid #b4b5c6;border-radius:2px;background:linear-gradient(90deg,#fdfdfe 0,#eeeef4 45%,#cfd0df 100%);box-shadow:inset 0 0 0 1px #fafafc;"><svg class="abs" style="left:2px;top:2px" width="10" height="10" viewBox="0 0 10 10"><path d="M1.5 6.5L5 3L8.5 6.5" fill="none" stroke="#4d5068" stroke-width="2.1"/></svg></div>
<div class="abs" style="left:1078px;top:742px;width:16px;height:16px;box-sizing:border-box;border:1px solid #b4b5c6;border-radius:2px;background:linear-gradient(90deg,#fdfdfe 0,#eeeef4 45%,#cfd0df 100%);box-shadow:inset 0 0 0 1px #fafafc;"><svg class="abs" style="left:2px;top:2px" width="10" height="10" viewBox="0 0 10 10"><path d="M1.5 3.5L5 7L8.5 3.5" fill="none" stroke="#4d5068" stroke-width="2.1"/></svg></div>
<div class="abs" style="left:1078px;top:369px;width:16px;height:21px;box-sizing:border-box;border:1px solid #b4b5c6;border-radius:2px;background:linear-gradient(90deg,#fdfdfe 0,#eeeef4 45%,#cfd0df 100%);box-shadow:inset 0 0 0 1px #fafafc;"><div class="abs" style="left:4px;top:5px;width:6px;height:8px;background:repeating-linear-gradient(#fff 0,#fff 1px,#8e90a8 1px,#8e90a8 2px);"></div></div>
<div class="abs" style="left:162px;top:760px;width:16px;height:16px;box-sizing:border-box;border:1px solid #b4b5c6;border-radius:2px;background:linear-gradient(180deg,#fdfdfe 0,#eeeef4 45%,#cfd0df 100%);box-shadow:inset 0 0 0 1px #fafafc;"><svg class="abs" style="left:2px;top:2px" width="10" height="10" viewBox="0 0 10 10"><path d="M6.5 1.5L3 5L6.5 8.5" fill="none" stroke="#4d5068" stroke-width="2.1"/></svg></div>
<div class="abs" style="left:1061px;top:760px;width:16px;height:16px;box-sizing:border-box;border:1px solid #b4b5c6;border-radius:2px;background:linear-gradient(180deg,#fdfdfe 0,#eeeef4 45%,#cfd0df 100%);box-shadow:inset 0 0 0 1px #fafafc;"><svg class="abs" style="left:2px;top:2px" width="10" height="10" viewBox="0 0 10 10"><path d="M3.5 1.5L7 5L3.5 8.5" fill="none" stroke="#4d5068" stroke-width="2.1"/></svg></div>
<div class="abs" style="left:673px;top:760px;width:39px;height:16px;box-sizing:border-box;border:1px solid #b4b5c6;border-radius:2px;background:linear-gradient(180deg,#fdfdfe 0,#eeeef4 45%,#cfd0df 100%);box-shadow:inset 0 0 0 1px #fafafc;"><div class="abs" style="left:14px;top:4px;width:8px;height:6px;background:repeating-linear-gradient(90deg,#fff 0,#fff 1px,#8e90a8 1px,#8e90a8 2px);"></div></div>
</div>
</body></html>
